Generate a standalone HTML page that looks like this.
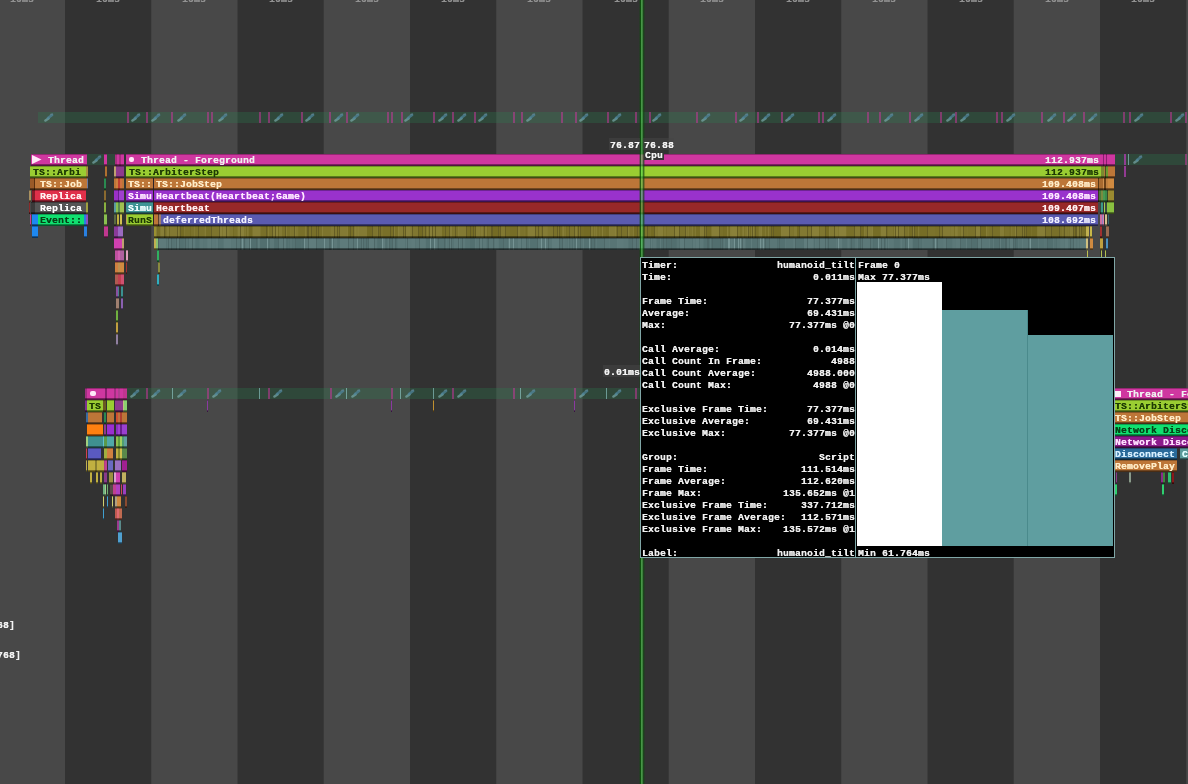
<!DOCTYPE html>
<html><head><meta charset="utf-8"><style>
html,body{margin:0;padding:0;}
body{width:1188px;height:784px;overflow:hidden;position:relative;background:#484848;font-family:"Liberation Mono",monospace;font-weight:bold;font-size:9.5px;letter-spacing:0.3px;}
.b{position:absolute;}
.c{box-shadow:inset 0 1px 0 rgba(0,0,0,0.28),inset 0 -1px 0 rgba(0,0,0,0.35),inset 0 -2px 0 rgba(0,0,0,0.4);}
.t{position:absolute;white-space:pre;line-height:11px;height:11px;will-change:transform;text-shadow:0.35px 0 0 currentColor;}
</style></head><body>
<div class="b" style="left:65px;top:0px;width:86px;height:784px;background:#323232;"></div>
<div class="b" style="left:151px;top:0px;width:1px;height:784px;background:#424242;"></div>
<div class="b" style="left:238px;top:0px;width:85px;height:784px;background:#323232;"></div>
<div class="b" style="left:237px;top:0px;width:1px;height:784px;background:#3d3d3d;"></div>
<div class="b" style="left:323px;top:0px;width:1px;height:784px;background:#383838;"></div>
<div class="b" style="left:410px;top:0px;width:86px;height:784px;background:#323232;"></div>
<div class="b" style="left:496px;top:0px;width:1px;height:784px;background:#424242;"></div>
<div class="b" style="left:583px;top:0px;width:85px;height:784px;background:#323232;"></div>
<div class="b" style="left:582px;top:0px;width:1px;height:784px;background:#3d3d3d;"></div>
<div class="b" style="left:668px;top:0px;width:1px;height:784px;background:#383838;"></div>
<div class="b" style="left:755px;top:0px;width:86px;height:784px;background:#323232;"></div>
<div class="b" style="left:841px;top:0px;width:1px;height:784px;background:#424242;"></div>
<div class="b" style="left:928px;top:0px;width:85px;height:784px;background:#323232;"></div>
<div class="b" style="left:927px;top:0px;width:1px;height:784px;background:#3d3d3d;"></div>
<div class="b" style="left:1013px;top:0px;width:1px;height:784px;background:#383838;"></div>
<div class="b" style="left:1100px;top:0px;width:86px;height:784px;background:#323232;"></div>
<div class="b" style="left:1186px;top:0px;width:1px;height:784px;background:#424242;"></div>
<div class="t" style="left:10px;top:-6px;color:#929292;">10ms</div>
<div class="t" style="left:96px;top:-6px;color:#929292;">10ms</div>
<div class="t" style="left:182px;top:-6px;color:#929292;">10ms</div>
<div class="t" style="left:269px;top:-6px;color:#929292;">10ms</div>
<div class="t" style="left:355px;top:-6px;color:#929292;">10ms</div>
<div class="t" style="left:441px;top:-6px;color:#929292;">10ms</div>
<div class="t" style="left:527px;top:-6px;color:#929292;">10ms</div>
<div class="t" style="left:614px;top:-6px;color:#929292;">10ms</div>
<div class="t" style="left:700px;top:-6px;color:#929292;">10ms</div>
<div class="t" style="left:786px;top:-6px;color:#929292;">10ms</div>
<div class="t" style="left:872px;top:-6px;color:#929292;">10ms</div>
<div class="t" style="left:959px;top:-6px;color:#929292;">10ms</div>
<div class="t" style="left:1045px;top:-6px;color:#929292;">10ms</div>
<div class="t" style="left:1131px;top:-6px;color:#929292;">10ms</div>
<div class="b" style="left:38px;top:112px;width:1150px;height:11px;background:rgba(40,130,80,0.28);"></div>
<div class="b" style="left:127px;top:112px;width:2px;height:11px;background:rgba(210,50,160,0.5);"></div>
<div class="b" style="left:146px;top:112px;width:2px;height:11px;background:rgba(210,50,160,0.5);"></div>
<div class="b" style="left:171px;top:112px;width:2px;height:11px;background:rgba(210,50,160,0.5);"></div>
<div class="b" style="left:207px;top:112px;width:2px;height:11px;background:rgba(210,50,160,0.5);"></div>
<div class="b" style="left:211px;top:112px;width:2px;height:11px;background:rgba(210,50,160,0.5);"></div>
<div class="b" style="left:259px;top:112px;width:2px;height:11px;background:rgba(210,50,160,0.5);"></div>
<div class="b" style="left:268px;top:112px;width:2px;height:11px;background:rgba(210,50,160,0.5);"></div>
<div class="b" style="left:301px;top:112px;width:2px;height:11px;background:rgba(210,50,160,0.5);"></div>
<div class="b" style="left:329px;top:112px;width:2px;height:11px;background:rgba(210,50,160,0.5);"></div>
<div class="b" style="left:346px;top:112px;width:2px;height:11px;background:rgba(210,50,160,0.5);"></div>
<div class="b" style="left:387px;top:112px;width:2px;height:11px;background:rgba(210,50,160,0.5);"></div>
<div class="b" style="left:391px;top:112px;width:2px;height:11px;background:rgba(210,50,160,0.5);"></div>
<div class="b" style="left:401px;top:112px;width:2px;height:11px;background:rgba(210,50,160,0.5);"></div>
<div class="b" style="left:433px;top:112px;width:2px;height:11px;background:rgba(210,50,160,0.5);"></div>
<div class="b" style="left:452px;top:112px;width:2px;height:11px;background:rgba(210,50,160,0.5);"></div>
<div class="b" style="left:474px;top:112px;width:2px;height:11px;background:rgba(210,50,160,0.5);"></div>
<div class="b" style="left:513px;top:112px;width:2px;height:11px;background:rgba(210,50,160,0.5);"></div>
<div class="b" style="left:521px;top:112px;width:2px;height:11px;background:rgba(210,50,160,0.5);"></div>
<div class="b" style="left:561px;top:112px;width:2px;height:11px;background:rgba(210,50,160,0.5);"></div>
<div class="b" style="left:575px;top:112px;width:2px;height:11px;background:rgba(210,50,160,0.5);"></div>
<div class="b" style="left:607px;top:112px;width:2px;height:11px;background:rgba(210,50,160,0.5);"></div>
<div class="b" style="left:635px;top:112px;width:2px;height:11px;background:rgba(210,50,160,0.5);"></div>
<div class="b" style="left:649px;top:112px;width:2px;height:11px;background:rgba(210,50,160,0.5);"></div>
<div class="b" style="left:696px;top:112px;width:2px;height:11px;background:rgba(210,50,160,0.5);"></div>
<div class="b" style="left:735px;top:112px;width:2px;height:11px;background:rgba(210,50,160,0.5);"></div>
<div class="b" style="left:757px;top:112px;width:2px;height:11px;background:rgba(210,50,160,0.5);"></div>
<div class="b" style="left:781px;top:112px;width:2px;height:11px;background:rgba(210,50,160,0.5);"></div>
<div class="b" style="left:818px;top:112px;width:2px;height:11px;background:rgba(210,50,160,0.5);"></div>
<div class="b" style="left:822px;top:112px;width:2px;height:11px;background:rgba(210,50,160,0.5);"></div>
<div class="b" style="left:867px;top:112px;width:2px;height:11px;background:rgba(210,50,160,0.5);"></div>
<div class="b" style="left:879px;top:112px;width:2px;height:11px;background:rgba(210,50,160,0.5);"></div>
<div class="b" style="left:909px;top:112px;width:2px;height:11px;background:rgba(210,50,160,0.5);"></div>
<div class="b" style="left:940px;top:112px;width:2px;height:11px;background:rgba(210,50,160,0.5);"></div>
<div class="b" style="left:955px;top:112px;width:2px;height:11px;background:rgba(210,50,160,0.5);"></div>
<div class="b" style="left:996px;top:112px;width:2px;height:11px;background:rgba(210,50,160,0.5);"></div>
<div class="b" style="left:1001px;top:112px;width:2px;height:11px;background:rgba(210,50,160,0.5);"></div>
<div class="b" style="left:1041px;top:112px;width:2px;height:11px;background:rgba(210,50,160,0.5);"></div>
<div class="b" style="left:1063px;top:112px;width:2px;height:11px;background:rgba(210,50,160,0.5);"></div>
<div class="b" style="left:1083px;top:112px;width:2px;height:11px;background:rgba(210,50,160,0.5);"></div>
<div class="b" style="left:1123px;top:112px;width:2px;height:11px;background:rgba(210,50,160,0.5);"></div>
<div class="b" style="left:1129px;top:112px;width:2px;height:11px;background:rgba(210,50,160,0.5);"></div>
<div class="b" style="left:1170px;top:112px;width:2px;height:11px;background:rgba(210,50,160,0.5);"></div>
<div class="b" style="left:1185px;top:112px;width:2px;height:11px;background:rgba(210,50,160,0.5);"></div>
<svg class="b" style="left:42px;top:111px;filter:blur(0.7px)" width="13" height="13" viewBox="-1 -1 13 13"><path d="M2.5 8.5 L5.5 6.5" stroke="#78a8a8" stroke-width="2.6" stroke-linecap="round" fill="none" opacity="0.7"/><path d="M5 6 L9 3" stroke="#5088a0" stroke-width="2.8" stroke-linecap="round" fill="none" opacity="0.7"/><path d="M7.5 2.5 L9.5 2" stroke="#6a8a98" stroke-width="1.4" stroke-linecap="round" fill="none" opacity="0.5"/></svg>
<svg class="b" style="left:129px;top:111px;filter:blur(0.7px)" width="13" height="13" viewBox="-1 -1 13 13"><path d="M2.5 8.5 L5.5 6.5" stroke="#78a8a8" stroke-width="2.6" stroke-linecap="round" fill="none" opacity="0.7"/><path d="M5 6 L9 3" stroke="#5088a0" stroke-width="2.8" stroke-linecap="round" fill="none" opacity="0.7"/><path d="M7.5 2.5 L9.5 2" stroke="#6a8a98" stroke-width="1.4" stroke-linecap="round" fill="none" opacity="0.5"/></svg>
<svg class="b" style="left:149px;top:111px;filter:blur(0.7px)" width="13" height="13" viewBox="-1 -1 13 13"><path d="M2.5 8.5 L5.5 6.5" stroke="#78a8a8" stroke-width="2.6" stroke-linecap="round" fill="none" opacity="0.7"/><path d="M5 6 L9 3" stroke="#5088a0" stroke-width="2.8" stroke-linecap="round" fill="none" opacity="0.7"/><path d="M7.5 2.5 L9.5 2" stroke="#6a8a98" stroke-width="1.4" stroke-linecap="round" fill="none" opacity="0.5"/></svg>
<svg class="b" style="left:175px;top:111px;filter:blur(0.7px)" width="13" height="13" viewBox="-1 -1 13 13"><path d="M2.5 8.5 L5.5 6.5" stroke="#78a8a8" stroke-width="2.6" stroke-linecap="round" fill="none" opacity="0.7"/><path d="M5 6 L9 3" stroke="#5088a0" stroke-width="2.8" stroke-linecap="round" fill="none" opacity="0.7"/><path d="M7.5 2.5 L9.5 2" stroke="#6a8a98" stroke-width="1.4" stroke-linecap="round" fill="none" opacity="0.5"/></svg>
<svg class="b" style="left:216px;top:111px;filter:blur(0.7px)" width="13" height="13" viewBox="-1 -1 13 13"><path d="M2.5 8.5 L5.5 6.5" stroke="#78a8a8" stroke-width="2.6" stroke-linecap="round" fill="none" opacity="0.7"/><path d="M5 6 L9 3" stroke="#5088a0" stroke-width="2.8" stroke-linecap="round" fill="none" opacity="0.7"/><path d="M7.5 2.5 L9.5 2" stroke="#6a8a98" stroke-width="1.4" stroke-linecap="round" fill="none" opacity="0.5"/></svg>
<svg class="b" style="left:272px;top:111px;filter:blur(0.7px)" width="13" height="13" viewBox="-1 -1 13 13"><path d="M2.5 8.5 L5.5 6.5" stroke="#78a8a8" stroke-width="2.6" stroke-linecap="round" fill="none" opacity="0.7"/><path d="M5 6 L9 3" stroke="#5088a0" stroke-width="2.8" stroke-linecap="round" fill="none" opacity="0.7"/><path d="M7.5 2.5 L9.5 2" stroke="#6a8a98" stroke-width="1.4" stroke-linecap="round" fill="none" opacity="0.5"/></svg>
<svg class="b" style="left:303px;top:111px;filter:blur(0.7px)" width="13" height="13" viewBox="-1 -1 13 13"><path d="M2.5 8.5 L5.5 6.5" stroke="#78a8a8" stroke-width="2.6" stroke-linecap="round" fill="none" opacity="0.7"/><path d="M5 6 L9 3" stroke="#5088a0" stroke-width="2.8" stroke-linecap="round" fill="none" opacity="0.7"/><path d="M7.5 2.5 L9.5 2" stroke="#6a8a98" stroke-width="1.4" stroke-linecap="round" fill="none" opacity="0.5"/></svg>
<svg class="b" style="left:332px;top:111px;filter:blur(0.7px)" width="13" height="13" viewBox="-1 -1 13 13"><path d="M2.5 8.5 L5.5 6.5" stroke="#78a8a8" stroke-width="2.6" stroke-linecap="round" fill="none" opacity="0.7"/><path d="M5 6 L9 3" stroke="#5088a0" stroke-width="2.8" stroke-linecap="round" fill="none" opacity="0.7"/><path d="M7.5 2.5 L9.5 2" stroke="#6a8a98" stroke-width="1.4" stroke-linecap="round" fill="none" opacity="0.5"/></svg>
<svg class="b" style="left:348px;top:111px;filter:blur(0.7px)" width="13" height="13" viewBox="-1 -1 13 13"><path d="M2.5 8.5 L5.5 6.5" stroke="#78a8a8" stroke-width="2.6" stroke-linecap="round" fill="none" opacity="0.7"/><path d="M5 6 L9 3" stroke="#5088a0" stroke-width="2.8" stroke-linecap="round" fill="none" opacity="0.7"/><path d="M7.5 2.5 L9.5 2" stroke="#6a8a98" stroke-width="1.4" stroke-linecap="round" fill="none" opacity="0.5"/></svg>
<svg class="b" style="left:402px;top:111px;filter:blur(0.7px)" width="13" height="13" viewBox="-1 -1 13 13"><path d="M2.5 8.5 L5.5 6.5" stroke="#78a8a8" stroke-width="2.6" stroke-linecap="round" fill="none" opacity="0.7"/><path d="M5 6 L9 3" stroke="#5088a0" stroke-width="2.8" stroke-linecap="round" fill="none" opacity="0.7"/><path d="M7.5 2.5 L9.5 2" stroke="#6a8a98" stroke-width="1.4" stroke-linecap="round" fill="none" opacity="0.5"/></svg>
<svg class="b" style="left:436px;top:111px;filter:blur(0.7px)" width="13" height="13" viewBox="-1 -1 13 13"><path d="M2.5 8.5 L5.5 6.5" stroke="#78a8a8" stroke-width="2.6" stroke-linecap="round" fill="none" opacity="0.7"/><path d="M5 6 L9 3" stroke="#5088a0" stroke-width="2.8" stroke-linecap="round" fill="none" opacity="0.7"/><path d="M7.5 2.5 L9.5 2" stroke="#6a8a98" stroke-width="1.4" stroke-linecap="round" fill="none" opacity="0.5"/></svg>
<svg class="b" style="left:455px;top:111px;filter:blur(0.7px)" width="13" height="13" viewBox="-1 -1 13 13"><path d="M2.5 8.5 L5.5 6.5" stroke="#78a8a8" stroke-width="2.6" stroke-linecap="round" fill="none" opacity="0.7"/><path d="M5 6 L9 3" stroke="#5088a0" stroke-width="2.8" stroke-linecap="round" fill="none" opacity="0.7"/><path d="M7.5 2.5 L9.5 2" stroke="#6a8a98" stroke-width="1.4" stroke-linecap="round" fill="none" opacity="0.5"/></svg>
<svg class="b" style="left:476px;top:111px;filter:blur(0.7px)" width="13" height="13" viewBox="-1 -1 13 13"><path d="M2.5 8.5 L5.5 6.5" stroke="#78a8a8" stroke-width="2.6" stroke-linecap="round" fill="none" opacity="0.7"/><path d="M5 6 L9 3" stroke="#5088a0" stroke-width="2.8" stroke-linecap="round" fill="none" opacity="0.7"/><path d="M7.5 2.5 L9.5 2" stroke="#6a8a98" stroke-width="1.4" stroke-linecap="round" fill="none" opacity="0.5"/></svg>
<svg class="b" style="left:524px;top:111px;filter:blur(0.7px)" width="13" height="13" viewBox="-1 -1 13 13"><path d="M2.5 8.5 L5.5 6.5" stroke="#78a8a8" stroke-width="2.6" stroke-linecap="round" fill="none" opacity="0.7"/><path d="M5 6 L9 3" stroke="#5088a0" stroke-width="2.8" stroke-linecap="round" fill="none" opacity="0.7"/><path d="M7.5 2.5 L9.5 2" stroke="#6a8a98" stroke-width="1.4" stroke-linecap="round" fill="none" opacity="0.5"/></svg>
<svg class="b" style="left:577px;top:111px;filter:blur(0.7px)" width="13" height="13" viewBox="-1 -1 13 13"><path d="M2.5 8.5 L5.5 6.5" stroke="#78a8a8" stroke-width="2.6" stroke-linecap="round" fill="none" opacity="0.7"/><path d="M5 6 L9 3" stroke="#5088a0" stroke-width="2.8" stroke-linecap="round" fill="none" opacity="0.7"/><path d="M7.5 2.5 L9.5 2" stroke="#6a8a98" stroke-width="1.4" stroke-linecap="round" fill="none" opacity="0.5"/></svg>
<svg class="b" style="left:610px;top:111px;filter:blur(0.7px)" width="13" height="13" viewBox="-1 -1 13 13"><path d="M2.5 8.5 L5.5 6.5" stroke="#78a8a8" stroke-width="2.6" stroke-linecap="round" fill="none" opacity="0.7"/><path d="M5 6 L9 3" stroke="#5088a0" stroke-width="2.8" stroke-linecap="round" fill="none" opacity="0.7"/><path d="M7.5 2.5 L9.5 2" stroke="#6a8a98" stroke-width="1.4" stroke-linecap="round" fill="none" opacity="0.5"/></svg>
<svg class="b" style="left:650px;top:111px;filter:blur(0.7px)" width="13" height="13" viewBox="-1 -1 13 13"><path d="M2.5 8.5 L5.5 6.5" stroke="#78a8a8" stroke-width="2.6" stroke-linecap="round" fill="none" opacity="0.7"/><path d="M5 6 L9 3" stroke="#5088a0" stroke-width="2.8" stroke-linecap="round" fill="none" opacity="0.7"/><path d="M7.5 2.5 L9.5 2" stroke="#6a8a98" stroke-width="1.4" stroke-linecap="round" fill="none" opacity="0.5"/></svg>
<svg class="b" style="left:699px;top:111px;filter:blur(0.7px)" width="13" height="13" viewBox="-1 -1 13 13"><path d="M2.5 8.5 L5.5 6.5" stroke="#78a8a8" stroke-width="2.6" stroke-linecap="round" fill="none" opacity="0.7"/><path d="M5 6 L9 3" stroke="#5088a0" stroke-width="2.8" stroke-linecap="round" fill="none" opacity="0.7"/><path d="M7.5 2.5 L9.5 2" stroke="#6a8a98" stroke-width="1.4" stroke-linecap="round" fill="none" opacity="0.5"/></svg>
<svg class="b" style="left:737px;top:111px;filter:blur(0.7px)" width="13" height="13" viewBox="-1 -1 13 13"><path d="M2.5 8.5 L5.5 6.5" stroke="#78a8a8" stroke-width="2.6" stroke-linecap="round" fill="none" opacity="0.7"/><path d="M5 6 L9 3" stroke="#5088a0" stroke-width="2.8" stroke-linecap="round" fill="none" opacity="0.7"/><path d="M7.5 2.5 L9.5 2" stroke="#6a8a98" stroke-width="1.4" stroke-linecap="round" fill="none" opacity="0.5"/></svg>
<svg class="b" style="left:759px;top:111px;filter:blur(0.7px)" width="13" height="13" viewBox="-1 -1 13 13"><path d="M2.5 8.5 L5.5 6.5" stroke="#78a8a8" stroke-width="2.6" stroke-linecap="round" fill="none" opacity="0.7"/><path d="M5 6 L9 3" stroke="#5088a0" stroke-width="2.8" stroke-linecap="round" fill="none" opacity="0.7"/><path d="M7.5 2.5 L9.5 2" stroke="#6a8a98" stroke-width="1.4" stroke-linecap="round" fill="none" opacity="0.5"/></svg>
<svg class="b" style="left:783px;top:111px;filter:blur(0.7px)" width="13" height="13" viewBox="-1 -1 13 13"><path d="M2.5 8.5 L5.5 6.5" stroke="#78a8a8" stroke-width="2.6" stroke-linecap="round" fill="none" opacity="0.7"/><path d="M5 6 L9 3" stroke="#5088a0" stroke-width="2.8" stroke-linecap="round" fill="none" opacity="0.7"/><path d="M7.5 2.5 L9.5 2" stroke="#6a8a98" stroke-width="1.4" stroke-linecap="round" fill="none" opacity="0.5"/></svg>
<svg class="b" style="left:825px;top:111px;filter:blur(0.7px)" width="13" height="13" viewBox="-1 -1 13 13"><path d="M2.5 8.5 L5.5 6.5" stroke="#78a8a8" stroke-width="2.6" stroke-linecap="round" fill="none" opacity="0.7"/><path d="M5 6 L9 3" stroke="#5088a0" stroke-width="2.8" stroke-linecap="round" fill="none" opacity="0.7"/><path d="M7.5 2.5 L9.5 2" stroke="#6a8a98" stroke-width="1.4" stroke-linecap="round" fill="none" opacity="0.5"/></svg>
<svg class="b" style="left:882px;top:111px;filter:blur(0.7px)" width="13" height="13" viewBox="-1 -1 13 13"><path d="M2.5 8.5 L5.5 6.5" stroke="#78a8a8" stroke-width="2.6" stroke-linecap="round" fill="none" opacity="0.7"/><path d="M5 6 L9 3" stroke="#5088a0" stroke-width="2.8" stroke-linecap="round" fill="none" opacity="0.7"/><path d="M7.5 2.5 L9.5 2" stroke="#6a8a98" stroke-width="1.4" stroke-linecap="round" fill="none" opacity="0.5"/></svg>
<svg class="b" style="left:912px;top:111px;filter:blur(0.7px)" width="13" height="13" viewBox="-1 -1 13 13"><path d="M2.5 8.5 L5.5 6.5" stroke="#78a8a8" stroke-width="2.6" stroke-linecap="round" fill="none" opacity="0.7"/><path d="M5 6 L9 3" stroke="#5088a0" stroke-width="2.8" stroke-linecap="round" fill="none" opacity="0.7"/><path d="M7.5 2.5 L9.5 2" stroke="#6a8a98" stroke-width="1.4" stroke-linecap="round" fill="none" opacity="0.5"/></svg>
<svg class="b" style="left:944px;top:111px;filter:blur(0.7px)" width="13" height="13" viewBox="-1 -1 13 13"><path d="M2.5 8.5 L5.5 6.5" stroke="#78a8a8" stroke-width="2.6" stroke-linecap="round" fill="none" opacity="0.7"/><path d="M5 6 L9 3" stroke="#5088a0" stroke-width="2.8" stroke-linecap="round" fill="none" opacity="0.7"/><path d="M7.5 2.5 L9.5 2" stroke="#6a8a98" stroke-width="1.4" stroke-linecap="round" fill="none" opacity="0.5"/></svg>
<svg class="b" style="left:958px;top:111px;filter:blur(0.7px)" width="13" height="13" viewBox="-1 -1 13 13"><path d="M2.5 8.5 L5.5 6.5" stroke="#78a8a8" stroke-width="2.6" stroke-linecap="round" fill="none" opacity="0.7"/><path d="M5 6 L9 3" stroke="#5088a0" stroke-width="2.8" stroke-linecap="round" fill="none" opacity="0.7"/><path d="M7.5 2.5 L9.5 2" stroke="#6a8a98" stroke-width="1.4" stroke-linecap="round" fill="none" opacity="0.5"/></svg>
<svg class="b" style="left:1004px;top:111px;filter:blur(0.7px)" width="13" height="13" viewBox="-1 -1 13 13"><path d="M2.5 8.5 L5.5 6.5" stroke="#78a8a8" stroke-width="2.6" stroke-linecap="round" fill="none" opacity="0.7"/><path d="M5 6 L9 3" stroke="#5088a0" stroke-width="2.8" stroke-linecap="round" fill="none" opacity="0.7"/><path d="M7.5 2.5 L9.5 2" stroke="#6a8a98" stroke-width="1.4" stroke-linecap="round" fill="none" opacity="0.5"/></svg>
<svg class="b" style="left:1045px;top:111px;filter:blur(0.7px)" width="13" height="13" viewBox="-1 -1 13 13"><path d="M2.5 8.5 L5.5 6.5" stroke="#78a8a8" stroke-width="2.6" stroke-linecap="round" fill="none" opacity="0.7"/><path d="M5 6 L9 3" stroke="#5088a0" stroke-width="2.8" stroke-linecap="round" fill="none" opacity="0.7"/><path d="M7.5 2.5 L9.5 2" stroke="#6a8a98" stroke-width="1.4" stroke-linecap="round" fill="none" opacity="0.5"/></svg>
<svg class="b" style="left:1065px;top:111px;filter:blur(0.7px)" width="13" height="13" viewBox="-1 -1 13 13"><path d="M2.5 8.5 L5.5 6.5" stroke="#78a8a8" stroke-width="2.6" stroke-linecap="round" fill="none" opacity="0.7"/><path d="M5 6 L9 3" stroke="#5088a0" stroke-width="2.8" stroke-linecap="round" fill="none" opacity="0.7"/><path d="M7.5 2.5 L9.5 2" stroke="#6a8a98" stroke-width="1.4" stroke-linecap="round" fill="none" opacity="0.5"/></svg>
<svg class="b" style="left:1086px;top:111px;filter:blur(0.7px)" width="13" height="13" viewBox="-1 -1 13 13"><path d="M2.5 8.5 L5.5 6.5" stroke="#78a8a8" stroke-width="2.6" stroke-linecap="round" fill="none" opacity="0.7"/><path d="M5 6 L9 3" stroke="#5088a0" stroke-width="2.8" stroke-linecap="round" fill="none" opacity="0.7"/><path d="M7.5 2.5 L9.5 2" stroke="#6a8a98" stroke-width="1.4" stroke-linecap="round" fill="none" opacity="0.5"/></svg>
<svg class="b" style="left:1132px;top:111px;filter:blur(0.7px)" width="13" height="13" viewBox="-1 -1 13 13"><path d="M2.5 8.5 L5.5 6.5" stroke="#78a8a8" stroke-width="2.6" stroke-linecap="round" fill="none" opacity="0.7"/><path d="M5 6 L9 3" stroke="#5088a0" stroke-width="2.8" stroke-linecap="round" fill="none" opacity="0.7"/><path d="M7.5 2.5 L9.5 2" stroke="#6a8a98" stroke-width="1.4" stroke-linecap="round" fill="none" opacity="0.5"/></svg>
<svg class="b" style="left:1173px;top:111px;filter:blur(0.7px)" width="13" height="13" viewBox="-1 -1 13 13"><path d="M2.5 8.5 L5.5 6.5" stroke="#78a8a8" stroke-width="2.6" stroke-linecap="round" fill="none" opacity="0.7"/><path d="M5 6 L9 3" stroke="#5088a0" stroke-width="2.8" stroke-linecap="round" fill="none" opacity="0.7"/><path d="M7.5 2.5 L9.5 2" stroke="#6a8a98" stroke-width="1.4" stroke-linecap="round" fill="none" opacity="0.5"/></svg>
<div class="b c" style="left:31px;top:154px;width:56px;height:12px;background:#cf37a0"></div>
<div class="b c" style="left:104px;top:154px;width:3px;height:12px;background:#cf37a0"></div>
<div class="b c" style="left:115px;top:154px;width:2px;height:12px;background:#a83080"></div>
<div class="b c" style="left:117px;top:154px;width:2px;height:12px;background:#cf37a0"></div>
<div class="b c" style="left:119px;top:154px;width:2px;height:12px;background:#a83080"></div>
<div class="b c" style="left:121px;top:154px;width:3px;height:12px;background:#cf37a0"></div>
<div class="b c" style="left:126px;top:154px;width:977px;height:12px;background:#cf37a0"></div>
<div class="b c" style="left:1103px;top:154px;width:1px;height:12px;background:#8a2070"></div>
<div class="b c" style="left:1104px;top:154px;width:2px;height:12px;background:#cf37a0"></div>
<div class="b c" style="left:1106px;top:154px;width:1px;height:12px;background:#8a2070"></div>
<div class="b c" style="left:1107px;top:154px;width:8px;height:12px;background:#cf37a0"></div>
<div class="b" style="left:87px;top:154px;width:17px;height:11px;background:rgba(40,130,80,0.28);"></div>
<svg class="b" style="left:90px;top:153px;filter:blur(0.7px)" width="13" height="13" viewBox="-1 -1 13 13"><path d="M2.5 8.5 L5.5 6.5" stroke="#78a8a8" stroke-width="2.6" stroke-linecap="round" fill="none" opacity="0.7"/><path d="M5 6 L9 3" stroke="#5088a0" stroke-width="2.8" stroke-linecap="round" fill="none" opacity="0.7"/><path d="M7.5 2.5 L9.5 2" stroke="#6a8a98" stroke-width="1.4" stroke-linecap="round" fill="none" opacity="0.5"/></svg>
<div class="b" style="left:107px;top:154px;width:8px;height:11px;background:rgba(40,130,80,0.28);"></div>
<div class="b" style="left:1115px;top:154px;width:73px;height:11px;background:rgba(40,130,80,0.28);"></div>
<div class="b" style="left:1124px;top:154px;width:2px;height:11px;background:rgba(170,60,170,0.8);"></div>
<div class="b" style="left:1128px;top:154px;width:1px;height:11px;background:rgba(150,210,210,0.6);"></div>
<svg class="b" style="left:1131px;top:153px;filter:blur(0.7px)" width="13" height="13" viewBox="-1 -1 13 13"><path d="M2.5 8.5 L5.5 6.5" stroke="#78a8a8" stroke-width="2.6" stroke-linecap="round" fill="none" opacity="0.7"/><path d="M5 6 L9 3" stroke="#5088a0" stroke-width="2.8" stroke-linecap="round" fill="none" opacity="0.7"/><path d="M7.5 2.5 L9.5 2" stroke="#6a8a98" stroke-width="1.4" stroke-linecap="round" fill="none" opacity="0.5"/></svg>
<div class="b" style="left:1185px;top:154px;width:2px;height:11px;background:rgba(210,50,160,0.5);"></div>
<svg class="b" style="left:32px;top:155px" width="10" height="9" viewBox="0 0 10 9"><path d="M0 0 L9.5 4.5 L0 9 Z" fill="#ffe8f8"/></svg>
<div class="t" style="left:48px;top:155px;color:#f0f0f0;">Thread</div>
<div class="b" style="left:129px;top:157px;width:5px;height:5px;border-radius:2px;background:#ffe8f8"></div>
<div class="t" style="left:141px;top:155px;color:#f0f0f0;">Thread - Foreground</div>
<div class="t" style="left:1045px;top:155px;color:#f0f0f0;">112.937ms</div>
<div class="b c" style="left:30px;top:166px;width:56px;height:12px;background:#9acd32"></div>
<div class="b c" style="left:86px;top:166px;width:2px;height:12px;background:#a89040"></div>
<div class="b c" style="left:105px;top:166px;width:2px;height:12px;background:#b07030"></div>
<div class="b c" style="left:114px;top:166px;width:2px;height:12px;background:#c0a070"></div>
<div class="b c" style="left:116px;top:166px;width:8px;height:12px;background:#8e3a8e"></div>
<div class="b c" style="left:126px;top:166px;width:975px;height:12px;background:#9acd32"></div>
<div class="b c" style="left:1101px;top:166px;width:3px;height:12px;background:#7a8a30"></div>
<div class="b c" style="left:1104px;top:166px;width:1px;height:12px;background:#b07a3a"></div>
<div class="b c" style="left:1105px;top:166px;width:1px;height:12px;background:#4a4a20"></div>
<div class="b c" style="left:1106px;top:166px;width:2px;height:12px;background:#6a9a30"></div>
<div class="b c" style="left:1108px;top:166px;width:7px;height:12px;background:#bd7638"></div>
<div class="b" style="left:1124px;top:166px;width:2px;height:11px;background:rgba(170,60,170,0.8);"></div>
<div class="t" style="left:33px;top:167px;color:#1e3a04;">TS::Arbi</div>
<div class="t" style="left:129px;top:167px;color:#1e3a04;">TS::ArbiterStep</div>
<div class="t" style="left:1045px;top:167px;color:#1e3a04;">112.937ms</div>
<div class="b c" style="left:30px;top:178px;width:4px;height:12px;background:#9a5a28"></div>
<div class="b c" style="left:34px;top:178px;width:1px;height:12px;background:#5a3010"></div>
<div class="b c" style="left:35px;top:178px;width:52px;height:12px;background:#bd7638"></div>
<div class="b c" style="left:87px;top:178px;width:1px;height:12px;background:#6a7aa0"></div>
<div class="b c" style="left:104px;top:178px;width:2px;height:12px;background:#2a8a50"></div>
<div class="b c" style="left:114px;top:178px;width:2px;height:12px;background:#bd7638"></div>
<div class="b c" style="left:116px;top:178px;width:2px;height:12px;background:#d08040"></div>
<div class="b c" style="left:118px;top:178px;width:2px;height:12px;background:#c04030"></div>
<div class="b c" style="left:120px;top:178px;width:2px;height:12px;background:#d07040"></div>
<div class="b c" style="left:122px;top:178px;width:2px;height:12px;background:#bd7638"></div>
<div class="b c" style="left:126px;top:178px;width:27px;height:12px;background:#bd7638"></div>
<div class="b c" style="left:154px;top:178px;width:944px;height:12px;background:#bd7638"></div>
<div class="b c" style="left:1098px;top:178px;width:1px;height:12px;background:#5a3a18"></div>
<div class="b c" style="left:1099px;top:178px;width:4px;height:12px;background:#a86a30"></div>
<div class="b c" style="left:1103px;top:178px;width:1px;height:12px;background:#d09050"></div>
<div class="b c" style="left:1104px;top:178px;width:2px;height:12px;background:#6a4018"></div>
<div class="b c" style="left:1106px;top:178px;width:2px;height:12px;background:#c08040"></div>
<div class="b c" style="left:1108px;top:178px;width:6px;height:12px;background:#d08a40"></div>
<div class="t" style="left:40px;top:179px;color:#ffecc8;">TS::Job</div>
<div class="t" style="left:128px;top:179px;color:#ffecc8;">TS::</div>
<div class="t" style="left:156px;top:179px;color:#ffecc8;">TS::JobStep</div>
<div class="t" style="left:1042px;top:179px;color:#ffecc8;">109.408ms</div>
<div class="b c" style="left:29px;top:190px;width:2px;height:12px;background:#a89060"></div>
<div class="b c" style="left:32px;top:190px;width:3px;height:12px;background:#8a1a28"></div>
<div class="b c" style="left:35px;top:190px;width:51px;height:12px;background:#e0304a"></div>
<div class="b c" style="left:104px;top:190px;width:2px;height:12px;background:#8a6a30"></div>
<div class="b c" style="left:114px;top:190px;width:4px;height:12px;background:#9a30c8"></div>
<div class="b c" style="left:118px;top:190px;width:1px;height:12px;background:#6a2090"></div>
<div class="b c" style="left:119px;top:190px;width:5px;height:12px;background:#a040d0"></div>
<div class="b c" style="left:126px;top:190px;width:27px;height:12px;background:#9932cc"></div>
<div class="b c" style="left:154px;top:190px;width:944px;height:12px;background:#9932cc"></div>
<div class="b c" style="left:1098px;top:190px;width:1px;height:12px;background:#3a3a20"></div>
<div class="b c" style="left:1099px;top:190px;width:2px;height:12px;background:#4a7a3a"></div>
<div class="b c" style="left:1101px;top:190px;width:2px;height:12px;background:#7a8a40"></div>
<div class="b c" style="left:1103px;top:190px;width:2px;height:12px;background:#4a9a50"></div>
<div class="b c" style="left:1105px;top:190px;width:2px;height:12px;background:#3a8a4a"></div>
<div class="b c" style="left:1107px;top:190px;width:1px;height:12px;background:#3a4a2a"></div>
<div class="b c" style="left:1108px;top:190px;width:6px;height:12px;background:#9a8a30"></div>
<div class="t" style="left:40px;top:191px;color:#fff0f0;">Replica</div>
<div class="t" style="left:128px;top:191px;color:#ffe8ff;">Simu</div>
<div class="t" style="left:156px;top:191px;color:#ffe8ff;">Heartbeat(Heartbeat;Game)</div>
<div class="t" style="left:1042px;top:191px;color:#ffe8ff;">109.408ms</div>
<div class="b c" style="left:29px;top:202px;width:1px;height:12px;background:#8a2a2a"></div>
<div class="b c" style="left:31px;top:202px;width:4px;height:12px;background:#3a3a3a"></div>
<div class="b c" style="left:35px;top:202px;width:51px;height:12px;background:#555555"></div>
<div class="b c" style="left:86px;top:202px;width:2px;height:12px;background:#a0a040"></div>
<div class="b c" style="left:104px;top:202px;width:2px;height:12px;background:#8ab040"></div>
<div class="b c" style="left:114px;top:202px;width:2px;height:12px;background:#5a9aa0"></div>
<div class="b c" style="left:116px;top:202px;width:2px;height:12px;background:#8ac050"></div>
<div class="b c" style="left:118px;top:202px;width:2px;height:12px;background:#5a8a50"></div>
<div class="b c" style="left:120px;top:202px;width:4px;height:12px;background:#a0c050"></div>
<div class="b c" style="left:126px;top:202px;width:27px;height:12px;background:#3f9595"></div>
<div class="b c" style="left:154px;top:202px;width:944px;height:12px;background:#982828"></div>
<div class="b c" style="left:1100px;top:202px;width:1px;height:12px;background:#3a4a40"></div>
<div class="b c" style="left:1101px;top:202px;width:2px;height:12px;background:#3a9a8a"></div>
<div class="b c" style="left:1104px;top:202px;width:1px;height:12px;background:#a0d050"></div>
<div class="b c" style="left:1105px;top:202px;width:2px;height:12px;background:#3a4a40"></div>
<div class="b c" style="left:1107px;top:202px;width:7px;height:12px;background:#8ac040"></div>
<div class="t" style="left:40px;top:203px;color:#ffffff;">Replica</div>
<div class="t" style="left:128px;top:203px;color:#f0ffff;">Simu</div>
<div class="t" style="left:156px;top:203px;color:#fff0f0;">Heartbeat</div>
<div class="t" style="left:1042px;top:203px;color:#fff0f0;">109.407ms</div>
<div class="b c" style="left:30px;top:214px;width:1px;height:12px;background:#cf37a0"></div>
<div class="b c" style="left:32px;top:214px;width:6px;height:12px;background:#1e88f0"></div>
<div class="b c" style="left:38px;top:214px;width:46px;height:12px;background:#10e070"></div>
<div class="b c" style="left:84px;top:214px;width:2px;height:12px;background:#2a80e0"></div>
<div class="b c" style="left:86px;top:214px;width:2px;height:12px;background:#8a50c0"></div>
<div class="b c" style="left:104px;top:214px;width:3px;height:12px;background:#8ac050"></div>
<div class="b c" style="left:114px;top:214px;width:2px;height:12px;background:#5a6a40"></div>
<div class="b c" style="left:117px;top:214px;width:2px;height:12px;background:#c0b040"></div>
<div class="b c" style="left:120px;top:214px;width:2px;height:12px;background:#d0c050"></div>
<div class="b c" style="left:126px;top:214px;width:1px;height:12px;background:#c0a050"></div>
<div class="b c" style="left:127px;top:214px;width:26px;height:12px;background:#9acd32"></div>
<div class="b c" style="left:154px;top:214px;width:4px;height:12px;background:#bd7638"></div>
<div class="b c" style="left:158px;top:214px;width:1px;height:12px;background:#5a4030"></div>
<div class="b c" style="left:159px;top:214px;width:2px;height:12px;background:#a08070"></div>
<div class="b c" style="left:161px;top:214px;width:937px;height:12px;background:#5b5bb1"></div>
<div class="b c" style="left:1100px;top:214px;width:2px;height:12px;background:#d070a0"></div>
<div class="b c" style="left:1102px;top:214px;width:1px;height:12px;background:#9080c0"></div>
<div class="b c" style="left:1103px;top:214px;width:1px;height:12px;background:#e080b0"></div>
<div class="b c" style="left:1105px;top:214px;width:2px;height:12px;background:#d8c090"></div>
<div class="b c" style="left:1108px;top:214px;width:1px;height:12px;background:#3a6a70"></div>
<div class="t" style="left:40px;top:215px;color:#064218;">Event::</div>
<div class="t" style="left:128px;top:215px;color:#1e3a04;">RunS</div>
<div class="t" style="left:163px;top:215px;color:#f0f0ff;">deferredThreads</div>
<div class="t" style="left:1042px;top:215px;color:#f0f0ff;">108.692ms</div>
<div class="b" style="left:153px;top:178px;width:1px;height:48px;background:#2a2228;"></div>
<div class="b c" style="left:32px;top:226px;width:6px;height:12px;background:#1e88f0"></div>
<div class="b c" style="left:84px;top:226px;width:3px;height:12px;background:#2a80e0"></div>
<div class="b c" style="left:104px;top:226px;width:4px;height:12px;background:#c03890"></div>
<div class="b c" style="left:114px;top:226px;width:4px;height:12px;background:#8a3a9a"></div>
<div class="b c" style="left:118px;top:226px;width:5px;height:12px;background:#9a6ac0"></div>
<div class="b c" style="left:154px;top:226px;width:2px;height:12px;background:#9a9030"></div>
<div class="b c" style="left:1086px;top:226px;width:3px;height:12px;background:#c0b050"></div>
<div class="b c" style="left:1090px;top:226px;width:2px;height:12px;background:#c8b848"></div>
<div class="b c" style="left:1100px;top:226px;width:2px;height:12px;background:#a03030"></div>
<div class="b c" style="left:1106px;top:226px;width:3px;height:12px;background:#9a6a50"></div>
<div class="b c" style="left:156px;top:226px;width:930px;height:12px;background:linear-gradient(90deg,#867d36 0px 1px,#766d26 1px 2px,#776e27 2px 4px,#827932 4px 5px,#887f38 5px 8px,#655d24 8px 9px,#776e27 9px 10px,#807730 10px 11px,#877e37 11px 13px,#746b24 13px 14px,#827932 14px 21px,#655d24 21px 22px,#867d36 22px 23px,#7e752e 23px 24px,#746b24 24px 24px,#655d24 24px 25px,#746b24 25px 28px,#807730 28px 29px,#7a712a 29px 34px,#746b24 34px 35px,#7b722b 35px 38px,#837a33 38px 39px,#7b722b 39px 42px,#655d24 42px 43px,#7b722b 43px 48px,#7d742d 48px 49px,#817831 49px 49px,#857c35 49px 50px,#776e27 50px 55px,#655d24 55px 56px,#7d742d 56px 63px,#655d24 63px 64px,#8a813a 64px 66px,#817831 66px 67px,#898039 67px 70px,#655d24 70px 71px,#867d36 71px 73px,#837a33 73px 74px,#807730 74px 77px,#756c25 77px 78px,#7b722b 78px 81px,#807730 81px 82px,#898039 82px 84px,#655d24 84px 85px,#8a813a 85px 88px,#7f762f 88px 89px,#827932 89px 90px,#776e27 90px 91px,#847b34 91px 92px,#7f762f 92px 93px,#746b24 93px 96px,#7d742d 96px 97px,#877e37 97px 104px,#807730 104px 105px,#797029 105px 110px,#655d24 110px 111px,#746b24 111px 112px,#857c35 112px 113px,#7b722b 113px 116px,#655d24 116px 117px,#867d36 117px 119px,#655d24 119px 120px,#898039 120px 122px,#746b24 122px 123px,#847b34 123px 125px,#847b34 125px 126px,#7a712a 126px 129px,#655d24 129px 130px,#837a33 130px 130px,#867d36 130px 131px,#7a712a 131px 134px,#817831 134px 135px,#7f762f 135px 138px,#655d24 138px 139px,#857c35 139px 139px,#877e37 139px 140px,#827932 140px 142px,#7b722b 142px 143px,#797029 143px 148px,#797029 148px 149px,#857c35 149px 150px,#7c732c 150px 151px,#898039 151px 151px,#655d24 151px 152px,#827932 152px 152px,#655d24 152px 153px,#7b722b 153px 155px,#655d24 155px 156px,#797029 156px 160px,#655d24 160px 161px,#797029 161px 162px,#655d24 162px 163px,#797029 163px 166px,#887f38 166px 167px,#7d742d 167px 174px,#7e752e 174px 175px,#837a33 175px 178px,#655d24 178px 179px,#807730 179px 181px,#655d24 181px 182px,#7c732c 182px 183px,#655d24 183px 184px,#847b34 184px 191px,#877e37 191px 192px,#746b24 192px 194px,#655d24 194px 195px,#786f28 195px 197px,#655d24 197px 198px,#827932 198px 199px,#898039 199px 200px,#857c35 200px 202px,#887f38 202px 203px,#847b34 203px 210px,#847b34 210px 211px,#746b24 211px 216px,#655d24 216px 217px,#7e752e 217px 221px,#817831 221px 222px,#7d742d 222px 222px,#655d24 222px 223px,#756c25 223px 224px,#655d24 224px 225px,#7d742d 225px 226px,#7d742d 226px 227px,#797029 227px 234px,#655d24 234px 235px,#786f28 235px 237px,#655d24 237px 238px,#867d36 238px 238px,#867d36 238px 239px,#797029 239px 242px,#8a813a 242px 243px,#847b34 243px 247px,#655d24 247px 248px,#7f762f 248px 249px,#655d24 249px 250px,#898039 250px 254px,#867d36 254px 255px,#837a33 255px 256px,#655d24 256px 257px,#807730 257px 262px,#655d24 262px 263px,#746b24 263px 266px,#655d24 266px 267px,#7d742d 267px 269px,#655d24 269px 270px,#7e752e 270px 271px,#867d36 271px 272px,#7e752e 272px 273px,#655d24 273px 274px,#898039 274px 276px,#655d24 276px 277px,#857c35 277px 279px,#655d24 279px 280px,#857c35 280px 285px,#857c35 285px 286px,#766d26 286px 287px,#766d26 287px 288px,#797029 288px 289px,#655d24 289px 290px,#7a712a 290px 293px,#655d24 293px 294px,#877e37 294px 296px,#7c732c 296px 297px,#7e752e 297px 299px,#655d24 299px 300px,#7b722b 300px 302px,#877e37 302px 303px,#837a33 303px 310px,#655d24 310px 311px,#776e27 311px 314px,#655d24 314px 315px,#766d26 315px 317px,#655d24 317px 318px,#786f28 318px 319px,#655d24 319px 320px,#867d36 320px 324px,#807730 324px 325px,#867d36 325px 326px,#867d36 326px 327px,#7c732c 327px 328px,#655d24 328px 329px,#867d36 329px 331px,#776e27 331px 332px,#7c732c 332px 335px,#655d24 335px 336px,#7d742d 336px 336px,#655d24 336px 337px,#746b24 337px 342px,#655d24 342px 343px,#756c25 343px 344px,#655d24 344px 345px,#817831 345px 349px,#655d24 349px 350px,#797029 350px 353px,#797029 353px 354px,#776e27 354px 361px,#655d24 361px 362px,#857c35 362px 364px,#7d742d 364px 365px,#7c732c 365px 368px,#7e752e 368px 369px,#7a712a 369px 370px,#756c25 370px 371px,#746b24 371px 371px,#7d742d 371px 372px,#877e37 372px 379px,#655d24 379px 380px,#7e752e 380px 382px,#655d24 382px 383px,#7e752e 383px 384px,#827932 384px 385px,#7c732c 385px 386px,#655d24 386px 387px,#857c35 387px 391px,#837a33 391px 392px,#7f762f 392px 397px,#655d24 397px 398px,#7a712a 398px 401px,#655d24 401px 402px,#7f762f 402px 403px,#655d24 403px 404px,#766d26 404px 406px,#827932 406px 407px,#887f38 407px 408px,#7e752e 408px 409px,#807730 409px 410px,#756c25 410px 411px,#797029 411px 413px,#655d24 413px 414px,#7d742d 414px 418px,#655d24 418px 419px,#857c35 419px 420px,#877e37 420px 421px,#7b722b 421px 422px,#655d24 422px 423px,#807730 423px 424px,#655d24 424px 425px,#766d26 425px 428px,#746b24 428px 429px,#746b24 429px 434px,#655d24 434px 435px,#837a33 435px 437px,#786f28 437px 438px,#847b34 438px 439px,#7e752e 439px 440px,#847b34 440px 441px,#797029 441px 442px,#786f28 442px 443px,#7e752e 443px 444px,#776e27 444px 446px,#877e37 446px 447px,#786f28 447px 449px,#786f28 449px 450px,#756c25 450px 453px,#877e37 453px 454px,#857c35 454px 459px,#8a813a 459px 460px,#797029 460px 461px,#655d24 461px 462px,#797029 462px 465px,#655d24 465px 466px,#7b722b 466px 471px,#655d24 471px 472px,#898039 472px 473px,#817831 473px 474px,#7c732c 474px 477px,#857c35 477px 478px,#746b24 478px 481px,#655d24 481px 482px,#797029 482px 484px,#655d24 484px 485px,#887f38 485px 485px,#867d36 485px 486px,#756c25 486px 486px,#867d36 486px 487px,#867d36 487px 488px,#655d24 488px 489px,#7c732c 489px 491px,#655d24 491px 492px,#797029 492px 494px,#7b722b 494px 495px,#746b24 495px 498px,#655d24 498px 499px,#847b34 499px 501px,#827932 501px 502px,#887f38 502px 507px,#7b722b 507px 508px,#837a33 508px 510px,#7b722b 510px 511px,#817831 511px 518px,#655d24 518px 519px,#887f38 519px 523px,#655d24 523px 524px,#7b722b 524px 529px,#655d24 529px 530px,#847b34 530px 531px,#7f762f 531px 532px,#847b34 532px 533px,#7a712a 533px 534px,#7d742d 534px 536px,#857c35 536px 537px,#797029 537px 539px,#827932 539px 540px,#766d26 540px 544px,#877e37 544px 545px,#867d36 545px 548px,#655d24 548px 549px,#7c732c 549px 550px,#655d24 550px 551px,#756c25 551px 555px,#807730 555px 556px,#887f38 556px 563px,#655d24 563px 564px,#797029 564px 567px,#756c25 567px 568px,#766d26 568px 571px,#887f38 571px 572px,#7c732c 572px 573px,#766d26 573px 574px,#877e37 574px 575px,#898039 575px 576px,#8a813a 576px 581px,#655d24 581px 582px,#807730 582px 583px,#817831 583px 584px,#797029 584px 586px,#827932 586px 587px,#877e37 587px 588px,#7a712a 588px 589px,#817831 589px 590px,#817831 590px 591px,#898039 591px 592px,#655d24 592px 593px,#807730 593px 594px,#746b24 594px 595px,#847b34 595px 596px,#655d24 596px 597px,#746b24 597px 597px,#877e37 597px 598px,#7c732c 598px 599px,#655d24 599px 600px,#786f28 600px 602px,#7c732c 602px 603px,#867d36 603px 605px,#898039 605px 606px,#797029 606px 609px,#837a33 609px 610px,#776e27 610px 612px,#867d36 612px 613px,#7a712a 613px 615px,#655d24 615px 616px,#746b24 616px 617px,#655d24 617px 618px,#746b24 618px 625px,#898039 625px 626px,#887f38 626px 633px,#655d24 633px 634px,#7f762f 634px 637px,#7d742d 637px 638px,#847b34 638px 640px,#847b34 640px 641px,#746b24 641px 643px,#655d24 643px 644px,#827932 644px 651px,#655d24 651px 652px,#807730 652px 655px,#655d24 655px 656px,#898039 656px 663px,#776e27 663px 664px,#807730 664px 669px,#655d24 669px 670px,#746b24 670px 673px,#887f38 673px 674px,#847b34 674px 678px,#655d24 678px 679px,#877e37 679px 682px,#817831 682px 683px,#8a813a 683px 690px,#7d742d 690px 691px,#797029 691px 698px,#655d24 698px 699px,#847b34 699px 704px,#655d24 704px 705px,#746b24 705px 708px,#867d36 708px 709px,#807730 709px 711px,#655d24 711px 712px,#867d36 712px 716px,#8a813a 716px 717px,#766d26 717px 724px,#7b722b 724px 725px,#887f38 725px 730px,#655d24 730px 731px,#817831 731px 731px,#786f28 731px 732px,#807730 732px 737px,#797029 737px 738px,#877e37 738px 739px,#655d24 739px 740px,#8a813a 740px 742px,#655d24 742px 743px,#857c35 743px 748px,#655d24 748px 749px,#7c732c 749px 752px,#827932 752px 753px,#756c25 753px 756px,#655d24 756px 757px,#867d36 757px 758px,#655d24 758px 759px,#766d26 759px 761px,#746b24 761px 762px,#847b34 762px 763px,#797029 763px 764px,#766d26 764px 771px,#655d24 771px 772px,#7c732c 772px 779px,#7a712a 779px 780px,#7a712a 780px 783px,#655d24 783px 784px,#7c732c 784px 786px,#655d24 786px 787px,#847b34 787px 794px,#827932 794px 795px,#857c35 795px 798px,#797029 798px 799px,#887f38 799px 801px,#857c35 801px 802px,#7f762f 802px 804px,#7b722b 804px 805px,#857c35 805px 807px,#655d24 807px 808px,#7c732c 808px 811px,#7e752e 811px 812px,#7b722b 812px 819px,#655d24 819px 820px,#8a813a 820px 824px,#655d24 824px 825px,#746b24 825px 830px,#877e37 830px 831px,#7e752e 831px 833px,#7b722b 833px 834px,#7a712a 834px 836px,#655d24 836px 837px,#797029 837px 844px,#867d36 844px 845px,#867d36 845px 848px,#786f28 848px 849px,#7c732c 849px 853px,#797029 853px 854px,#786f28 854px 855px,#827932 855px 856px,#7d742d 856px 858px,#7b722b 858px 859px,#8a813a 859px 860px,#655d24 860px 861px,#7d742d 861px 866px,#655d24 866px 867px,#807730 867px 868px,#655d24 868px 869px,#797029 869px 870px,#655d24 870px 871px,#746b24 871px 875px,#7a712a 875px 876px,#756c25 876px 881px,#847b34 881px 882px,#877e37 882px 889px,#655d24 889px 890px,#7c732c 890px 895px,#655d24 895px 896px,#797029 896px 903px,#655d24 903px 904px,#7b722b 904px 906px,#807730 906px 907px,#7b722b 907px 908px,#655d24 908px 909px,#827932 909px 911px,#807730 911px 912px,#827932 912px 913px,#7e752e 913px 914px,#867d36 914px 917px,#655d24 917px 918px,#766d26 918px 919px,#655d24 919px 920px,#837a33 920px 920px,#655d24 920px 921px,#867d36 921px 923px,#655d24 923px 924px,#807730 924px 925px,#655d24 925px 926px,#786f28 926px 929px,#746b24 929px 930px)"></div>
<div class="b c" style="left:114px;top:238px;width:8px;height:12px;background:#d040b0"></div>
<div class="b c" style="left:122px;top:238px;width:2px;height:12px;background:#c0a070"></div>
<div class="b c" style="left:154px;top:238px;width:2px;height:12px;background:#c0b050"></div>
<div class="b c" style="left:156px;top:238px;width:2px;height:12px;background:#8ac070"></div>
<div class="b c" style="left:1086px;top:238px;width:2px;height:12px;background:#d0c080"></div>
<div class="b c" style="left:1090px;top:238px;width:3px;height:12px;background:#d08a40"></div>
<div class="b c" style="left:1100px;top:238px;width:3px;height:12px;background:#c0a040"></div>
<div class="b c" style="left:1106px;top:238px;width:2px;height:12px;background:#4a90c0"></div>
<div class="b c" style="left:158px;top:238px;width:928px;height:12px;background:linear-gradient(90deg,#537070 0px 0px,#4e6868 0px 1px,#5e7b7b 1px 8px,#567373 8px 9px,#5b7878 9px 10px,#4e6868 10px 11px,#5c7979 11px 13px,#4e6868 13px 14px,#577474 14px 17px,#597676 17px 18px,#5f7c7c 18px 18px,#4e6868 18px 19px,#607d7d 19px 21px,#4e6868 21px 22px,#547171 22px 25px,#557272 25px 26px,#577474 26px 27px,#4e6868 27px 28px,#5a7777 28px 30px,#547171 30px 31px,#5e7b7b 31px 34px,#4e6868 34px 35px,#5e7b7b 35px 37px,#577474 37px 38px,#547171 38px 41px,#587575 41px 42px,#5c7979 42px 45px,#597676 45px 46px,#5a7777 46px 49px,#5e7b7b 49px 50px,#607d7d 50px 53px,#577474 53px 54px,#5d7a7a 54px 57px,#5c7979 57px 58px,#5f7c7c 58px 60px,#547171 60px 61px,#567373 61px 65px,#597676 65px 66px,#5f7c7c 66px 73px,#5a7777 73px 74px,#5b7878 74px 78px,#4e6868 78px 79px,#5a7777 79px 82px,#4e6868 82px 83px,#5e7b7b 83px 84px,#769494 84px 85px,#5d7a7a 85px 86px,#4e6868 86px 87px,#567373 87px 87px,#5c7979 87px 88px,#5e7b7b 88px 89px,#5f7c7c 89px 90px,#607d7d 90px 91px,#4e6868 91px 92px,#526f6f 92px 92px,#769494 92px 93px,#526f6f 93px 98px,#4e6868 98px 99px,#526f6f 99px 99px,#526f6f 99px 100px,#5f7c7c 100px 101px,#5d7a7a 101px 102px,#526f6f 102px 109px,#769494 109px 110px,#547171 110px 111px,#526f6f 111px 112px,#5c7979 112px 116px,#537070 116px 117px,#526f6f 117px 120px,#4e6868 120px 121px,#5d7a7a 121px 125px,#4e6868 125px 126px,#5f7c7c 126px 128px,#547171 128px 129px,#537070 129px 130px,#577474 130px 131px,#597676 131px 131px,#547171 131px 132px,#597676 132px 134px,#547171 134px 135px,#567373 135px 137px,#4e6868 137px 138px,#526f6f 138px 143px,#547171 143px 144px,#526f6f 144px 146px,#769494 146px 147px,#5c7979 147px 150px,#4e6868 150px 151px,#607d7d 151px 158px,#4e6868 158px 159px,#597676 159px 166px,#769494 166px 167px,#5b7878 167px 168px,#5b7878 168px 169px,#5c7979 169px 171px,#4e6868 171px 172px,#547171 172px 172px,#4e6868 172px 173px,#5a7777 173px 174px,#769494 174px 175px,#547171 175px 175px,#537070 175px 176px,#5c7979 176px 179px,#567373 179px 180px,#557272 180px 182px,#5e7b7b 182px 183px,#5e7b7b 183px 190px,#4e6868 190px 191px,#5b7878 191px 195px,#4e6868 195px 196px,#5b7878 196px 199px,#769494 199px 200px,#577474 200px 203px,#4e6868 203px 204px,#5b7878 204px 205px,#4e6868 205px 206px,#567373 206px 208px,#4e6868 208px 209px,#537070 209px 210px,#4e6868 210px 211px,#5f7c7c 211px 216px,#4e6868 216px 217px,#5c7979 217px 219px,#557272 219px 220px,#537070 220px 224px,#769494 224px 225px,#607d7d 225px 227px,#557272 227px 228px,#537070 228px 229px,#587575 229px 230px,#5e7b7b 230px 231px,#4e6868 231px 232px,#537070 232px 234px,#4e6868 234px 235px,#5c7979 235px 237px,#4e6868 237px 238px,#526f6f 238px 239px,#597676 239px 240px,#5d7a7a 240px 247px,#577474 247px 248px,#5e7b7b 248px 249px,#4e6868 249px 250px,#5d7a7a 250px 253px,#5e7b7b 253px 254px,#5f7c7c 254px 257px,#587575 257px 258px,#5b7878 258px 261px,#4e6868 261px 262px,#5d7a7a 262px 267px,#5b7878 267px 268px,#537070 268px 272px,#769494 272px 273px,#547171 273px 276px,#769494 276px 277px,#607d7d 277px 278px,#5e7b7b 278px 279px,#567373 279px 280px,#4e6868 280px 281px,#577474 281px 286px,#4e6868 286px 287px,#547171 287px 288px,#5e7b7b 288px 289px,#5a7777 289px 291px,#4e6868 291px 292px,#607d7d 292px 293px,#4e6868 293px 294px,#587575 294px 295px,#577474 295px 296px,#5d7a7a 296px 300px,#4e6868 300px 301px,#5e7b7b 301px 301px,#607d7d 301px 302px,#5a7777 302px 304px,#4e6868 304px 305px,#5d7a7a 305px 307px,#587575 307px 308px,#577474 308px 311px,#577474 311px 312px,#537070 312px 317px,#5f7c7c 317px 318px,#5b7878 318px 321px,#4e6868 321px 322px,#607d7d 322px 324px,#526f6f 324px 325px,#5d7a7a 325px 328px,#597676 328px 329px,#526f6f 329px 330px,#4e6868 330px 331px,#5b7878 331px 335px,#4e6868 335px 336px,#587575 336px 337px,#5e7b7b 337px 338px,#5d7a7a 338px 340px,#5b7878 340px 341px,#547171 341px 345px,#4e6868 345px 346px,#567373 346px 349px,#547171 349px 350px,#5e7b7b 350px 351px,#769494 351px 352px,#5a7777 352px 355px,#769494 355px 356px,#597676 356px 360px,#607d7d 360px 361px,#607d7d 361px 363px,#526f6f 363px 364px,#5e7b7b 364px 368px,#4e6868 368px 369px,#567373 369px 371px,#5e7b7b 371px 372px,#547171 372px 379px,#4e6868 379px 380px,#5c7979 380px 383px,#769494 383px 384px,#597676 384px 387px,#769494 387px 388px,#5b7878 388px 390px,#4e6868 390px 391px,#597676 391px 393px,#597676 393px 394px,#607d7d 394px 401px,#4e6868 401px 402px,#567373 402px 404px,#4e6868 404px 405px,#5c7979 405px 407px,#5a7777 407px 408px,#5a7777 408px 409px,#587575 409px 410px,#5e7b7b 410px 411px,#537070 411px 412px,#597676 412px 413px,#5a7777 413px 414px,#537070 414px 415px,#5e7b7b 415px 416px,#557272 416px 418px,#769494 418px 419px,#577474 419px 422px,#4e6868 422px 423px,#597676 423px 425px,#607d7d 425px 426px,#557272 426px 431px,#769494 431px 432px,#597676 432px 433px,#4e6868 433px 434px,#547171 434px 436px,#4e6868 436px 437px,#567373 437px 438px,#5c7979 438px 439px,#577474 439px 446px,#4e6868 446px 447px,#5a7777 447px 451px,#5d7a7a 451px 452px,#587575 452px 459px,#5f7c7c 459px 460px,#5e7b7b 460px 465px,#5d7a7a 465px 466px,#5c7979 466px 470px,#577474 470px 471px,#547171 471px 474px,#4e6868 474px 475px,#597676 475px 478px,#4e6868 478px 479px,#587575 479px 481px,#769494 481px 482px,#547171 482px 484px,#4e6868 484px 485px,#5e7b7b 485px 492px,#526f6f 492px 493px,#5f7c7c 493px 494px,#587575 494px 495px,#5c7979 495px 498px,#577474 498px 499px,#537070 499px 502px,#5e7b7b 502px 503px,#547171 503px 505px,#4e6868 505px 506px,#557272 506px 508px,#4e6868 508px 509px,#526f6f 509px 513px,#4e6868 513px 514px,#526f6f 514px 518px,#547171 518px 519px,#597676 519px 521px,#547171 521px 522px,#5f7c7c 522px 526px,#4e6868 526px 527px,#5b7878 527px 534px,#557272 534px 535px,#5e7b7b 535px 537px,#5b7878 537px 538px,#5f7c7c 538px 541px,#537070 541px 542px,#5c7979 542px 545px,#587575 545px 546px,#547171 546px 549px,#4e6868 549px 550px,#607d7d 550px 550px,#4e6868 550px 551px,#537070 551px 552px,#5c7979 552px 553px,#537070 553px 554px,#4e6868 554px 555px,#526f6f 555px 562px,#4e6868 562px 563px,#547171 563px 564px,#4e6868 564px 565px,#577474 565px 566px,#5c7979 566px 567px,#557272 567px 570px,#769494 570px 571px,#547171 571px 571px,#769494 571px 572px,#5a7777 572px 573px,#5f7c7c 573px 574px,#5c7979 574px 576px,#769494 576px 577px,#526f6f 577px 580px,#769494 580px 581px,#597676 581px 582px,#769494 582px 583px,#5c7979 583px 584px,#4e6868 584px 585px,#607d7d 585px 587px,#5a7777 587px 588px,#547171 588px 593px,#5f7c7c 593px 594px,#557272 594px 599px,#4e6868 599px 600px,#587575 600px 602px,#769494 602px 603px,#5e7b7b 603px 605px,#769494 605px 606px,#597676 606px 607px,#4e6868 607px 608px,#567373 608px 611px,#4e6868 611px 612px,#5a7777 612px 619px,#526f6f 619px 620px,#557272 620px 621px,#4e6868 621px 622px,#547171 622px 627px,#5d7a7a 627px 628px,#597676 628px 635px,#5d7a7a 635px 636px,#5f7c7c 636px 637px,#4e6868 637px 638px,#557272 638px 645px,#547171 645px 646px,#607d7d 646px 649px,#4e6868 649px 650px,#607d7d 650px 655px,#5c7979 655px 656px,#547171 656px 657px,#5d7a7a 657px 658px,#5b7878 658px 661px,#4e6868 661px 662px,#5d7a7a 662px 667px,#4e6868 667px 668px,#5c7979 668px 669px,#567373 669px 670px,#557272 670px 670px,#4e6868 670px 671px,#587575 671px 678px,#5d7a7a 678px 679px,#587575 679px 680px,#769494 680px 681px,#5f7c7c 681px 684px,#577474 684px 685px,#567373 685px 689px,#5b7878 689px 690px,#5e7b7b 690px 691px,#5b7878 691px 692px,#547171 692px 693px,#4e6868 693px 694px,#557272 694px 697px,#5c7979 697px 698px,#5c7979 698px 699px,#5f7c7c 699px 700px,#537070 700px 702px,#4e6868 702px 703px,#577474 703px 704px,#4e6868 704px 705px,#5c7979 705px 712px,#4e6868 712px 713px,#597676 713px 715px,#526f6f 715px 716px,#547171 716px 720px,#769494 720px 721px,#5d7a7a 721px 723px,#4e6868 723px 724px,#5c7979 724px 726px,#4e6868 726px 727px,#547171 727px 728px,#5f7c7c 728px 729px,#557272 729px 730px,#607d7d 730px 731px,#5b7878 731px 735px,#5a7777 735px 736px,#557272 736px 741px,#567373 741px 742px,#5b7878 742px 743px,#5f7c7c 743px 744px,#587575 744px 747px,#4e6868 747px 748px,#557272 748px 750px,#769494 750px 751px,#5f7c7c 751px 754px,#5b7878 754px 755px,#526f6f 755px 760px,#4e6868 760px 761px,#557272 761px 763px,#537070 763px 764px,#5a7777 764px 766px,#597676 766px 767px,#597676 767px 774px,#557272 774px 775px,#597676 775px 775px,#4e6868 775px 776px,#577474 776px 777px,#769494 777px 778px,#5c7979 778px 779px,#4e6868 779px 780px,#5a7777 780px 785px,#5c7979 785px 786px,#5d7a7a 786px 788px,#4e6868 788px 789px,#567373 789px 794px,#5a7777 794px 795px,#5c7979 795px 797px,#5b7878 797px 798px,#5e7b7b 798px 802px,#4e6868 802px 803px,#567373 803px 808px,#607d7d 808px 809px,#547171 809px 813px,#4e6868 813px 814px,#526f6f 814px 819px,#4e6868 819px 820px,#5d7a7a 820px 823px,#4e6868 823px 824px,#5a7777 824px 831px,#5e7b7b 831px 832px,#557272 832px 834px,#547171 834px 835px,#5b7878 835px 835px,#5d7a7a 835px 836px,#547171 836px 841px,#4e6868 841px 842px,#557272 842px 842px,#607d7d 842px 843px,#537070 843px 845px,#537070 845px 846px,#557272 846px 847px,#4e6868 847px 848px,#5d7a7a 848px 848px,#4e6868 848px 849px,#5b7878 849px 851px,#526f6f 851px 852px,#607d7d 852px 855px,#4e6868 855px 856px,#547171 856px 857px,#4e6868 857px 858px,#526f6f 858px 860px,#5b7878 860px 861px,#587575 861px 864px,#5f7c7c 864px 865px,#597676 865px 870px,#4e6868 870px 871px,#5f7c7c 871px 872px,#769494 872px 873px,#547171 873px 880px,#5c7979 880px 881px,#567373 881px 886px,#597676 886px 887px,#587575 887px 889px,#4e6868 889px 890px,#526f6f 890px 895px,#5b7878 895px 896px,#567373 896px 898px,#526f6f 898px 899px,#597676 899px 902px,#5c7979 902px 903px,#5d7a7a 903px 906px,#5a7777 906px 907px,#607d7d 907px 910px,#5a7777 910px 911px,#597676 911px 912px,#4e6868 912px 913px,#587575 913px 915px,#4e6868 915px 916px,#5d7a7a 916px 917px,#5c7979 917px 918px,#587575 918px 919px,#5b7878 919px 920px,#5d7a7a 920px 921px,#587575 921px 922px,#5d7a7a 922px 927px,#607d7d 927px 928px)"></div>
<div class="b c" style="left:115px;top:250px;width:3px;height:12px;background:#c050a0"></div>
<div class="b c" style="left:118px;top:250px;width:2px;height:12px;background:#d060b0"></div>
<div class="b c" style="left:120px;top:250px;width:4px;height:12px;background:#b060a0"></div>
<div class="b c" style="left:126px;top:250px;width:2px;height:12px;background:#e0a0c0"></div>
<div class="b c" style="left:157px;top:250px;width:2px;height:12px;background:#30b060"></div>
<div class="b c" style="left:1087px;top:250px;width:1px;height:12px;background:#c0c050"></div>
<div class="b c" style="left:1101px;top:250px;width:1px;height:12px;background:#b0c050"></div>
<div class="b c" style="left:1105px;top:250px;width:1px;height:12px;background:#b0c050"></div>
<div class="b c" style="left:115px;top:262px;width:3px;height:12px;background:#d08040"></div>
<div class="b c" style="left:118px;top:262px;width:2px;height:12px;background:#c09050"></div>
<div class="b c" style="left:120px;top:262px;width:4px;height:12px;background:#d08a40"></div>
<div class="b c" style="left:126px;top:262px;width:1px;height:12px;background:#a03030"></div>
<div class="b c" style="left:158px;top:262px;width:2px;height:12px;background:#8a8a40"></div>
<div class="b c" style="left:115px;top:274px;width:3px;height:12px;background:#b05a50"></div>
<div class="b c" style="left:118px;top:274px;width:3px;height:12px;background:#c04050"></div>
<div class="b c" style="left:121px;top:274px;width:3px;height:12px;background:#d05070"></div>
<div class="b c" style="left:157px;top:274px;width:2px;height:12px;background:#30b0c0"></div>
<div class="b c" style="left:116px;top:286px;width:2px;height:12px;background:#8a50a0"></div>
<div class="b c" style="left:118px;top:286px;width:1px;height:12px;background:#4a8090"></div>
<div class="b c" style="left:121px;top:286px;width:2px;height:12px;background:#3a9090"></div>
<div class="b c" style="left:116px;top:298px;width:3px;height:12px;background:#a08070"></div>
<div class="b c" style="left:121px;top:298px;width:2px;height:12px;background:#8a60b0"></div>
<div class="b c" style="left:116px;top:310px;width:2px;height:12px;background:#70b040"></div>
<div class="b c" style="left:116px;top:322px;width:2px;height:12px;background:#c0a040"></div>
<div class="b c" style="left:116px;top:334px;width:2px;height:12px;background:#9080a0"></div>
<div class="b c" style="left:85px;top:388px;width:2px;height:12px;background:#a03080"></div>
<div class="b c" style="left:87px;top:388px;width:18px;height:12px;background:#cf37a0"></div>
<div class="b c" style="left:105px;top:388px;width:2px;height:12px;background:#8a2070"></div>
<div class="b c" style="left:107px;top:388px;width:7px;height:12px;background:#cf37a0"></div>
<div class="b c" style="left:114px;top:388px;width:2px;height:12px;background:#a03080"></div>
<div class="b c" style="left:116px;top:388px;width:2px;height:12px;background:#cf37a0"></div>
<div class="b c" style="left:118px;top:388px;width:2px;height:12px;background:#b04090"></div>
<div class="b c" style="left:120px;top:388px;width:3px;height:12px;background:#cf37a0"></div>
<div class="b c" style="left:123px;top:388px;width:4px;height:12px;background:#c03590"></div>
<div class="b" style="left:90px;top:391px;width:6px;height:5px;border-radius:2px;background:#ffe8f8"></div>
<div class="b" style="left:127px;top:388px;width:513px;height:11px;background:rgba(40,130,80,0.28);"></div>
<div class="b" style="left:146px;top:388px;width:2px;height:11px;background:rgba(210,50,160,0.5);"></div>
<div class="b" style="left:207px;top:388px;width:2px;height:11px;background:rgba(210,50,160,0.5);"></div>
<div class="b" style="left:268px;top:388px;width:2px;height:11px;background:rgba(210,50,160,0.5);"></div>
<div class="b" style="left:330px;top:388px;width:2px;height:11px;background:rgba(210,50,160,0.5);"></div>
<div class="b" style="left:391px;top:388px;width:2px;height:11px;background:rgba(210,50,160,0.5);"></div>
<div class="b" style="left:452px;top:388px;width:2px;height:11px;background:rgba(210,50,160,0.5);"></div>
<div class="b" style="left:513px;top:388px;width:2px;height:11px;background:rgba(210,50,160,0.5);"></div>
<div class="b" style="left:574px;top:388px;width:2px;height:11px;background:rgba(210,50,160,0.5);"></div>
<div class="b" style="left:635px;top:388px;width:2px;height:11px;background:rgba(210,50,160,0.5);"></div>
<div class="b" style="left:172px;top:388px;width:1px;height:11px;background:rgba(150,210,210,0.6);"></div>
<div class="b" style="left:259px;top:388px;width:1px;height:11px;background:rgba(150,210,210,0.6);"></div>
<div class="b" style="left:346px;top:388px;width:1px;height:11px;background:rgba(150,210,210,0.6);"></div>
<div class="b" style="left:400px;top:388px;width:1px;height:11px;background:rgba(150,210,210,0.6);"></div>
<div class="b" style="left:433px;top:388px;width:1px;height:11px;background:rgba(150,210,210,0.6);"></div>
<div class="b" style="left:520px;top:388px;width:1px;height:11px;background:rgba(150,210,210,0.6);"></div>
<div class="b" style="left:606px;top:388px;width:1px;height:11px;background:rgba(150,210,210,0.6);"></div>
<svg class="b" style="left:128px;top:387px;filter:blur(0.7px)" width="13" height="13" viewBox="-1 -1 13 13"><path d="M2.5 8.5 L5.5 6.5" stroke="#78a8a8" stroke-width="2.6" stroke-linecap="round" fill="none" opacity="0.7"/><path d="M5 6 L9 3" stroke="#5088a0" stroke-width="2.8" stroke-linecap="round" fill="none" opacity="0.7"/><path d="M7.5 2.5 L9.5 2" stroke="#6a8a98" stroke-width="1.4" stroke-linecap="round" fill="none" opacity="0.5"/></svg>
<svg class="b" style="left:149px;top:387px;filter:blur(0.7px)" width="13" height="13" viewBox="-1 -1 13 13"><path d="M2.5 8.5 L5.5 6.5" stroke="#78a8a8" stroke-width="2.6" stroke-linecap="round" fill="none" opacity="0.7"/><path d="M5 6 L9 3" stroke="#5088a0" stroke-width="2.8" stroke-linecap="round" fill="none" opacity="0.7"/><path d="M7.5 2.5 L9.5 2" stroke="#6a8a98" stroke-width="1.4" stroke-linecap="round" fill="none" opacity="0.5"/></svg>
<svg class="b" style="left:175px;top:387px;filter:blur(0.7px)" width="13" height="13" viewBox="-1 -1 13 13"><path d="M2.5 8.5 L5.5 6.5" stroke="#78a8a8" stroke-width="2.6" stroke-linecap="round" fill="none" opacity="0.7"/><path d="M5 6 L9 3" stroke="#5088a0" stroke-width="2.8" stroke-linecap="round" fill="none" opacity="0.7"/><path d="M7.5 2.5 L9.5 2" stroke="#6a8a98" stroke-width="1.4" stroke-linecap="round" fill="none" opacity="0.5"/></svg>
<svg class="b" style="left:210px;top:387px;filter:blur(0.7px)" width="13" height="13" viewBox="-1 -1 13 13"><path d="M2.5 8.5 L5.5 6.5" stroke="#78a8a8" stroke-width="2.6" stroke-linecap="round" fill="none" opacity="0.7"/><path d="M5 6 L9 3" stroke="#5088a0" stroke-width="2.8" stroke-linecap="round" fill="none" opacity="0.7"/><path d="M7.5 2.5 L9.5 2" stroke="#6a8a98" stroke-width="1.4" stroke-linecap="round" fill="none" opacity="0.5"/></svg>
<svg class="b" style="left:271px;top:387px;filter:blur(0.7px)" width="13" height="13" viewBox="-1 -1 13 13"><path d="M2.5 8.5 L5.5 6.5" stroke="#78a8a8" stroke-width="2.6" stroke-linecap="round" fill="none" opacity="0.7"/><path d="M5 6 L9 3" stroke="#5088a0" stroke-width="2.8" stroke-linecap="round" fill="none" opacity="0.7"/><path d="M7.5 2.5 L9.5 2" stroke="#6a8a98" stroke-width="1.4" stroke-linecap="round" fill="none" opacity="0.5"/></svg>
<svg class="b" style="left:333px;top:387px;filter:blur(0.7px)" width="13" height="13" viewBox="-1 -1 13 13"><path d="M2.5 8.5 L5.5 6.5" stroke="#78a8a8" stroke-width="2.6" stroke-linecap="round" fill="none" opacity="0.7"/><path d="M5 6 L9 3" stroke="#5088a0" stroke-width="2.8" stroke-linecap="round" fill="none" opacity="0.7"/><path d="M7.5 2.5 L9.5 2" stroke="#6a8a98" stroke-width="1.4" stroke-linecap="round" fill="none" opacity="0.5"/></svg>
<svg class="b" style="left:349px;top:387px;filter:blur(0.7px)" width="13" height="13" viewBox="-1 -1 13 13"><path d="M2.5 8.5 L5.5 6.5" stroke="#78a8a8" stroke-width="2.6" stroke-linecap="round" fill="none" opacity="0.7"/><path d="M5 6 L9 3" stroke="#5088a0" stroke-width="2.8" stroke-linecap="round" fill="none" opacity="0.7"/><path d="M7.5 2.5 L9.5 2" stroke="#6a8a98" stroke-width="1.4" stroke-linecap="round" fill="none" opacity="0.5"/></svg>
<svg class="b" style="left:403px;top:387px;filter:blur(0.7px)" width="13" height="13" viewBox="-1 -1 13 13"><path d="M2.5 8.5 L5.5 6.5" stroke="#78a8a8" stroke-width="2.6" stroke-linecap="round" fill="none" opacity="0.7"/><path d="M5 6 L9 3" stroke="#5088a0" stroke-width="2.8" stroke-linecap="round" fill="none" opacity="0.7"/><path d="M7.5 2.5 L9.5 2" stroke="#6a8a98" stroke-width="1.4" stroke-linecap="round" fill="none" opacity="0.5"/></svg>
<svg class="b" style="left:436px;top:387px;filter:blur(0.7px)" width="13" height="13" viewBox="-1 -1 13 13"><path d="M2.5 8.5 L5.5 6.5" stroke="#78a8a8" stroke-width="2.6" stroke-linecap="round" fill="none" opacity="0.7"/><path d="M5 6 L9 3" stroke="#5088a0" stroke-width="2.8" stroke-linecap="round" fill="none" opacity="0.7"/><path d="M7.5 2.5 L9.5 2" stroke="#6a8a98" stroke-width="1.4" stroke-linecap="round" fill="none" opacity="0.5"/></svg>
<svg class="b" style="left:455px;top:387px;filter:blur(0.7px)" width="13" height="13" viewBox="-1 -1 13 13"><path d="M2.5 8.5 L5.5 6.5" stroke="#78a8a8" stroke-width="2.6" stroke-linecap="round" fill="none" opacity="0.7"/><path d="M5 6 L9 3" stroke="#5088a0" stroke-width="2.8" stroke-linecap="round" fill="none" opacity="0.7"/><path d="M7.5 2.5 L9.5 2" stroke="#6a8a98" stroke-width="1.4" stroke-linecap="round" fill="none" opacity="0.5"/></svg>
<svg class="b" style="left:524px;top:387px;filter:blur(0.7px)" width="13" height="13" viewBox="-1 -1 13 13"><path d="M2.5 8.5 L5.5 6.5" stroke="#78a8a8" stroke-width="2.6" stroke-linecap="round" fill="none" opacity="0.7"/><path d="M5 6 L9 3" stroke="#5088a0" stroke-width="2.8" stroke-linecap="round" fill="none" opacity="0.7"/><path d="M7.5 2.5 L9.5 2" stroke="#6a8a98" stroke-width="1.4" stroke-linecap="round" fill="none" opacity="0.5"/></svg>
<svg class="b" style="left:577px;top:387px;filter:blur(0.7px)" width="13" height="13" viewBox="-1 -1 13 13"><path d="M2.5 8.5 L5.5 6.5" stroke="#78a8a8" stroke-width="2.6" stroke-linecap="round" fill="none" opacity="0.7"/><path d="M5 6 L9 3" stroke="#5088a0" stroke-width="2.8" stroke-linecap="round" fill="none" opacity="0.7"/><path d="M7.5 2.5 L9.5 2" stroke="#6a8a98" stroke-width="1.4" stroke-linecap="round" fill="none" opacity="0.5"/></svg>
<svg class="b" style="left:610px;top:387px;filter:blur(0.7px)" width="13" height="13" viewBox="-1 -1 13 13"><path d="M2.5 8.5 L5.5 6.5" stroke="#78a8a8" stroke-width="2.6" stroke-linecap="round" fill="none" opacity="0.7"/><path d="M5 6 L9 3" stroke="#5088a0" stroke-width="2.8" stroke-linecap="round" fill="none" opacity="0.7"/><path d="M7.5 2.5 L9.5 2" stroke="#6a8a98" stroke-width="1.4" stroke-linecap="round" fill="none" opacity="0.5"/></svg>
<div class="b c" style="left:85px;top:400px;width:2px;height:12px;background:#7a3090"></div>
<div class="b c" style="left:87px;top:400px;width:16px;height:12px;background:#9acd32"></div>
<div class="b c" style="left:103px;top:400px;width:3px;height:12px;background:#6a5a20"></div>
<div class="b c" style="left:107px;top:400px;width:7px;height:12px;background:#9acd32"></div>
<div class="b c" style="left:115px;top:400px;width:8px;height:12px;background:#8e3a8e"></div>
<div class="b c" style="left:123px;top:400px;width:1px;height:12px;background:#c0c080"></div>
<div class="b c" style="left:124px;top:400px;width:3px;height:12px;background:#8ad070"></div>
<div class="b c" style="left:207px;top:400px;width:1px;height:12px;background:#8a3aa0"></div>
<div class="b c" style="left:391px;top:400px;width:1px;height:12px;background:#8a3aa0"></div>
<div class="b c" style="left:433px;top:400px;width:1px;height:12px;background:#c09030"></div>
<div class="b c" style="left:574px;top:400px;width:1px;height:12px;background:#8a3aa0"></div>
<div class="t" style="left:89px;top:401px;color:#1e3a04;">TS</div>
<div class="b c" style="left:86px;top:412px;width:2px;height:12px;background:#3a6aa0"></div>
<div class="b c" style="left:88px;top:412px;width:14px;height:12px;background:#bd7638"></div>
<div class="b c" style="left:104px;top:412px;width:2px;height:12px;background:#2a8a50"></div>
<div class="b c" style="left:107px;top:412px;width:7px;height:12px;background:#bd7638"></div>
<div class="b c" style="left:116px;top:412px;width:2px;height:12px;background:#d05030"></div>
<div class="b c" style="left:118px;top:412px;width:2px;height:12px;background:#c07040"></div>
<div class="b c" style="left:120px;top:412px;width:2px;height:12px;background:#b04030"></div>
<div class="b c" style="left:122px;top:412px;width:5px;height:12px;background:#bd7638"></div>
<div class="b c" style="left:87px;top:424px;width:16px;height:12px;background:#ff8010"></div>
<div class="b c" style="left:104px;top:424px;width:2px;height:12px;background:#8a3a90"></div>
<div class="b c" style="left:107px;top:424px;width:7px;height:12px;background:#9a30d0"></div>
<div class="b c" style="left:116px;top:424px;width:2px;height:12px;background:#8a30c0"></div>
<div class="b c" style="left:118px;top:424px;width:2px;height:12px;background:#a040d0"></div>
<div class="b c" style="left:120px;top:424px;width:2px;height:12px;background:#6a2090"></div>
<div class="b c" style="left:122px;top:424px;width:5px;height:12px;background:#9a40d0"></div>
<div class="b c" style="left:86px;top:436px;width:2px;height:12px;background:#a0d080"></div>
<div class="b c" style="left:88px;top:436px;width:15px;height:12px;background:#3f9090"></div>
<div class="b c" style="left:103px;top:436px;width:1px;height:12px;background:#60c0d0"></div>
<div class="b c" style="left:104px;top:436px;width:3px;height:12px;background:#5a9a4a"></div>
<div class="b c" style="left:107px;top:436px;width:7px;height:12px;background:#50a8a8"></div>
<div class="b c" style="left:116px;top:436px;width:2px;height:12px;background:#90c050"></div>
<div class="b c" style="left:118px;top:436px;width:2px;height:12px;background:#60a040"></div>
<div class="b c" style="left:120px;top:436px;width:2px;height:12px;background:#a0d060"></div>
<div class="b c" style="left:122px;top:436px;width:2px;height:12px;background:#50a070"></div>
<div class="b c" style="left:124px;top:436px;width:3px;height:12px;background:#60a0a0"></div>
<div class="b c" style="left:86px;top:448px;width:1px;height:12px;background:#d04050"></div>
<div class="b c" style="left:88px;top:448px;width:13px;height:12px;background:#5a5ac0"></div>
<div class="b c" style="left:104px;top:448px;width:3px;height:12px;background:#a0b040"></div>
<div class="b c" style="left:107px;top:448px;width:6px;height:12px;background:#d08040"></div>
<div class="b c" style="left:116px;top:448px;width:2px;height:12px;background:#c0b040"></div>
<div class="b c" style="left:118px;top:448px;width:2px;height:12px;background:#8a8a30"></div>
<div class="b c" style="left:120px;top:448px;width:2px;height:12px;background:#d0c050"></div>
<div class="b c" style="left:122px;top:448px;width:5px;height:12px;background:#5a8a4a"></div>
<div class="b c" style="left:86px;top:460px;width:1px;height:12px;background:#c0b050"></div>
<div class="b c" style="left:88px;top:460px;width:7px;height:12px;background:#c0b040"></div>
<div class="b c" style="left:95px;top:460px;width:2px;height:12px;background:#8a8030"></div>
<div class="b c" style="left:97px;top:460px;width:7px;height:12px;background:#c0b040"></div>
<div class="b c" style="left:104px;top:460px;width:1px;height:12px;background:#b04080"></div>
<div class="b c" style="left:105px;top:460px;width:2px;height:12px;background:#c04090"></div>
<div class="b c" style="left:108px;top:460px;width:5px;height:12px;background:#6a6ac0"></div>
<div class="b c" style="left:115px;top:460px;width:6px;height:12px;background:#9a70c0"></div>
<div class="b c" style="left:122px;top:460px;width:5px;height:12px;background:#a02090"></div>
<div class="b c" style="left:90px;top:472px;width:2px;height:12px;background:#c0b040"></div>
<div class="b c" style="left:96px;top:472px;width:2px;height:12px;background:#c0b040"></div>
<div class="b c" style="left:100px;top:472px;width:2px;height:12px;background:#c0b040"></div>
<div class="b c" style="left:104px;top:472px;width:3px;height:12px;background:#8a3a8a"></div>
<div class="b c" style="left:109px;top:472px;width:4px;height:12px;background:#9a9040"></div>
<div class="b c" style="left:114px;top:472px;width:2px;height:12px;background:#e0a0d0"></div>
<div class="b c" style="left:116px;top:472px;width:4px;height:12px;background:#d040b0"></div>
<div class="b c" style="left:122px;top:472px;width:4px;height:12px;background:#c0b060"></div>
<div class="b c" style="left:103px;top:484px;width:2px;height:12px;background:#70b080"></div>
<div class="b c" style="left:105px;top:484px;width:1px;height:12px;background:#a0d090"></div>
<div class="b c" style="left:107px;top:484px;width:1px;height:12px;background:#70b070"></div>
<div class="b c" style="left:110px;top:484px;width:3px;height:12px;background:#5a4a4a"></div>
<div class="b c" style="left:113px;top:484px;width:3px;height:12px;background:#c04090"></div>
<div class="b c" style="left:116px;top:484px;width:4px;height:12px;background:#b040c0"></div>
<div class="b c" style="left:121px;top:484px;width:1px;height:12px;background:#d04060"></div>
<div class="b c" style="left:123px;top:484px;width:3px;height:12px;background:#9a40c0"></div>
<div class="b c" style="left:103px;top:496px;width:1px;height:12px;background:#d0d070"></div>
<div class="b c" style="left:107px;top:496px;width:1px;height:12px;background:#40a0d0"></div>
<div class="b c" style="left:112px;top:496px;width:1px;height:12px;background:#d0d070"></div>
<div class="b c" style="left:115px;top:496px;width:2px;height:12px;background:#b0a080"></div>
<div class="b c" style="left:117px;top:496px;width:4px;height:12px;background:#d08a40"></div>
<div class="b c" style="left:125px;top:496px;width:2px;height:12px;background:#8a4a30"></div>
<div class="b c" style="left:103px;top:508px;width:1px;height:12px;background:#40a0d0"></div>
<div class="b c" style="left:115px;top:508px;width:2px;height:12px;background:#c05a50"></div>
<div class="b c" style="left:117px;top:508px;width:2px;height:12px;background:#e06a70"></div>
<div class="b c" style="left:119px;top:508px;width:3px;height:12px;background:#c06a50"></div>
<div class="b c" style="left:117px;top:520px;width:2px;height:12px;background:#9a3a90"></div>
<div class="b c" style="left:119px;top:520px;width:2px;height:12px;background:#5a8a8a"></div>
<div class="b c" style="left:118px;top:532px;width:4px;height:12px;background:#50a0d0"></div>
<div class="b c" style="left:1115px;top:388px;width:73px;height:12px;background:#cf37a0"></div>
<div class="b" style="left:1115px;top:391px;width:6px;height:6px;background:#fff0f8;"></div>
<div class="t" style="left:1127px;top:389px;color:#f0f0f0;">Thread - Foreground</div>
<div class="b c" style="left:1115px;top:400px;width:73px;height:12px;background:#9acd32"></div>
<div class="t" style="left:1115px;top:401px;color:#1e3a04;">TS::ArbiterStep</div>
<div class="b c" style="left:1115px;top:412px;width:73px;height:12px;background:#bd7638"></div>
<div class="t" style="left:1115px;top:413px;color:#ffecc8;">TS::JobStep</div>
<div class="b c" style="left:1115px;top:424px;width:73px;height:12px;background:#10e070"></div>
<div class="t" style="left:1115px;top:425px;color:#064218;">Network Disconnect</div>
<div class="b c" style="left:1115px;top:436px;width:73px;height:12px;background:#8b1a8b"></div>
<div class="t" style="left:1115px;top:437px;color:#ffe0ff;">Network Disconnect</div>
<div class="b c" style="left:1115px;top:448px;width:62px;height:12px;background:#2a6a9a"></div>
<div class="b c" style="left:1180px;top:448px;width:8px;height:12px;background:#5a9a9a"></div>
<div class="t" style="left:1115px;top:449px;color:#d8f0ff;">Disconnect</div>
<div class="t" style="left:1182px;top:449px;color:#e0ffff;">C</div>
<div class="b c" style="left:1115px;top:460px;width:62px;height:12px;background:#bd7638"></div>
<div class="t" style="left:1115px;top:461px;color:#ffecc8;">RemovePlay</div>
<div class="b c" style="left:1116px;top:472px;width:1px;height:12px;background:#8a3a8a"></div>
<div class="b c" style="left:1129px;top:472px;width:2px;height:12px;background:#8a9a8a"></div>
<div class="b c" style="left:1161px;top:472px;width:2px;height:12px;background:#8a2a8a"></div>
<div class="b c" style="left:1163px;top:472px;width:2px;height:12px;background:#3a8a3a"></div>
<div class="b c" style="left:1168px;top:472px;width:3px;height:12px;background:#30c070"></div>
<div class="b c" style="left:1172px;top:472px;width:2px;height:12px;background:#8a1a1a"></div>
<div class="b c" style="left:1115px;top:484px;width:2px;height:12px;background:#30d070"></div>
<div class="b c" style="left:1162px;top:484px;width:2px;height:12px;background:#30d070"></div>
<div class="b" style="left:639px;top:0px;width:6px;height:784px;background:linear-gradient(90deg,rgba(14,74,14,0.3) 0 1px,rgba(6,87,6,0.8) 1px 2px,rgba(83,216,83,0.6) 2px 3px,rgba(63,178,63,0.6) 3px 4px,rgba(18,78,18,0.7) 4px 5px,rgba(14,74,14,0.3) 5px 6px);"></div>
<div class="b" style="left:609px;top:138px;width:31px;height:12px;background:rgba(70,70,70,0.55);"></div>
<div class="t" style="left:610px;top:140px;color:#f4f4f4;">76.87</div>
<div class="b" style="left:643px;top:138px;width:31px;height:12px;background:rgba(70,70,70,0.55);"></div>
<div class="t" style="left:644px;top:140px;color:#f4f4f4;">76.88</div>
<div class="b" style="left:644px;top:150px;width:20px;height:10px;background:#343434;"></div>
<div class="t" style="left:645px;top:150px;color:#f4f4f4;">Cpu</div>
<div class="b" style="left:603px;top:365px;width:37px;height:12px;background:rgba(70,70,70,0.55);"></div>
<div class="t" style="left:604px;top:367px;color:#f4f4f4;">0.01ms</div>
<div class="t" style="left:-3px;top:620px;color:#f4f4f4;">68]</div>
<div class="t" style="left:-3px;top:650px;color:#f4f4f4;">768]</div>
<div class="b" style="left:640px;top:257px;width:473px;height:299px;background:#000;border:1px solid #80a6a6"></div>
<div class="t" style="left:642px;top:260px;color:#f0f0f0;">Timer:</div>
<div class="t" style="left:777px;top:260px;color:#f0f0f0;">humanoid_tilt</div>
<div class="t" style="left:642px;top:272px;color:#f0f0f0;">Time:</div>
<div class="t" style="left:813px;top:272px;color:#f0f0f0;">0.011ms</div>
<div class="t" style="left:642px;top:296px;color:#f0f0f0;">Frame Time:</div>
<div class="t" style="left:807px;top:296px;color:#f0f0f0;">77.377ms</div>
<div class="t" style="left:642px;top:308px;color:#f0f0f0;">Average:</div>
<div class="t" style="left:807px;top:308px;color:#f0f0f0;">69.431ms</div>
<div class="t" style="left:642px;top:320px;color:#f0f0f0;">Max:</div>
<div class="t" style="left:789px;top:320px;color:#f0f0f0;">77.377ms @0</div>
<div class="t" style="left:642px;top:344px;color:#f0f0f0;">Call Average:</div>
<div class="t" style="left:813px;top:344px;color:#f0f0f0;">0.014ms</div>
<div class="t" style="left:642px;top:356px;color:#f0f0f0;">Call Count In Frame:</div>
<div class="t" style="left:831px;top:356px;color:#f0f0f0;">4988</div>
<div class="t" style="left:642px;top:368px;color:#f0f0f0;">Call Count Average:</div>
<div class="t" style="left:807px;top:368px;color:#f0f0f0;">4988.000</div>
<div class="t" style="left:642px;top:380px;color:#f0f0f0;">Call Count Max:</div>
<div class="t" style="left:813px;top:380px;color:#f0f0f0;">4988 @0</div>
<div class="t" style="left:642px;top:404px;color:#f0f0f0;">Exclusive Frame Time:</div>
<div class="t" style="left:807px;top:404px;color:#f0f0f0;">77.377ms</div>
<div class="t" style="left:642px;top:416px;color:#f0f0f0;">Exclusive Average:</div>
<div class="t" style="left:807px;top:416px;color:#f0f0f0;">69.431ms</div>
<div class="t" style="left:642px;top:428px;color:#f0f0f0;">Exclusive Max:</div>
<div class="t" style="left:789px;top:428px;color:#f0f0f0;">77.377ms @0</div>
<div class="t" style="left:642px;top:452px;color:#f0f0f0;">Group:</div>
<div class="t" style="left:819px;top:452px;color:#f0f0f0;">Script</div>
<div class="t" style="left:642px;top:464px;color:#f0f0f0;">Frame Time:</div>
<div class="t" style="left:801px;top:464px;color:#f0f0f0;">111.514ms</div>
<div class="t" style="left:642px;top:476px;color:#f0f0f0;">Frame Average:</div>
<div class="t" style="left:801px;top:476px;color:#f0f0f0;">112.620ms</div>
<div class="t" style="left:642px;top:488px;color:#f0f0f0;">Frame Max:</div>
<div class="t" style="left:783px;top:488px;color:#f0f0f0;">135.652ms @1</div>
<div class="t" style="left:642px;top:500px;color:#f0f0f0;">Exclusive Frame Time:</div>
<div class="t" style="left:801px;top:500px;color:#f0f0f0;">337.712ms</div>
<div class="t" style="left:642px;top:512px;color:#f0f0f0;">Exclusive Frame Average:</div>
<div class="t" style="left:801px;top:512px;color:#f0f0f0;">112.571ms</div>
<div class="t" style="left:642px;top:524px;color:#f0f0f0;">Exclusive Frame Max:</div>
<div class="t" style="left:783px;top:524px;color:#f0f0f0;">135.572ms @1</div>
<div class="t" style="left:642px;top:548px;color:#f0f0f0;">Label:</div>
<div class="t" style="left:777px;top:548px;color:#f0f0f0;">humanoid_tilt</div>
<div class="b" style="left:855px;top:258px;width:1px;height:299px;background:#7aa4a4;"></div>
<div class="b" style="left:857px;top:282px;width:85px;height:264px;background:#ffffff;"></div>
<div class="b" style="left:942px;top:310px;width:85px;height:236px;background:#5f9ea0;"></div>
<div class="b" style="left:1027px;top:310px;width:1px;height:236px;background:#4a8a8c;"></div>
<div class="b" style="left:1028px;top:335px;width:85px;height:211px;background:#5f9ea0;"></div>
<div class="t" style="left:858px;top:260px;color:#f0f0f0;">Frame 0</div>
<div class="t" style="left:858px;top:272px;color:#f0f0f0;">Max 77.377ms</div>
<div class="t" style="left:858px;top:548px;color:#f0f0f0;">Min 61.764ms</div>
</body></html>
